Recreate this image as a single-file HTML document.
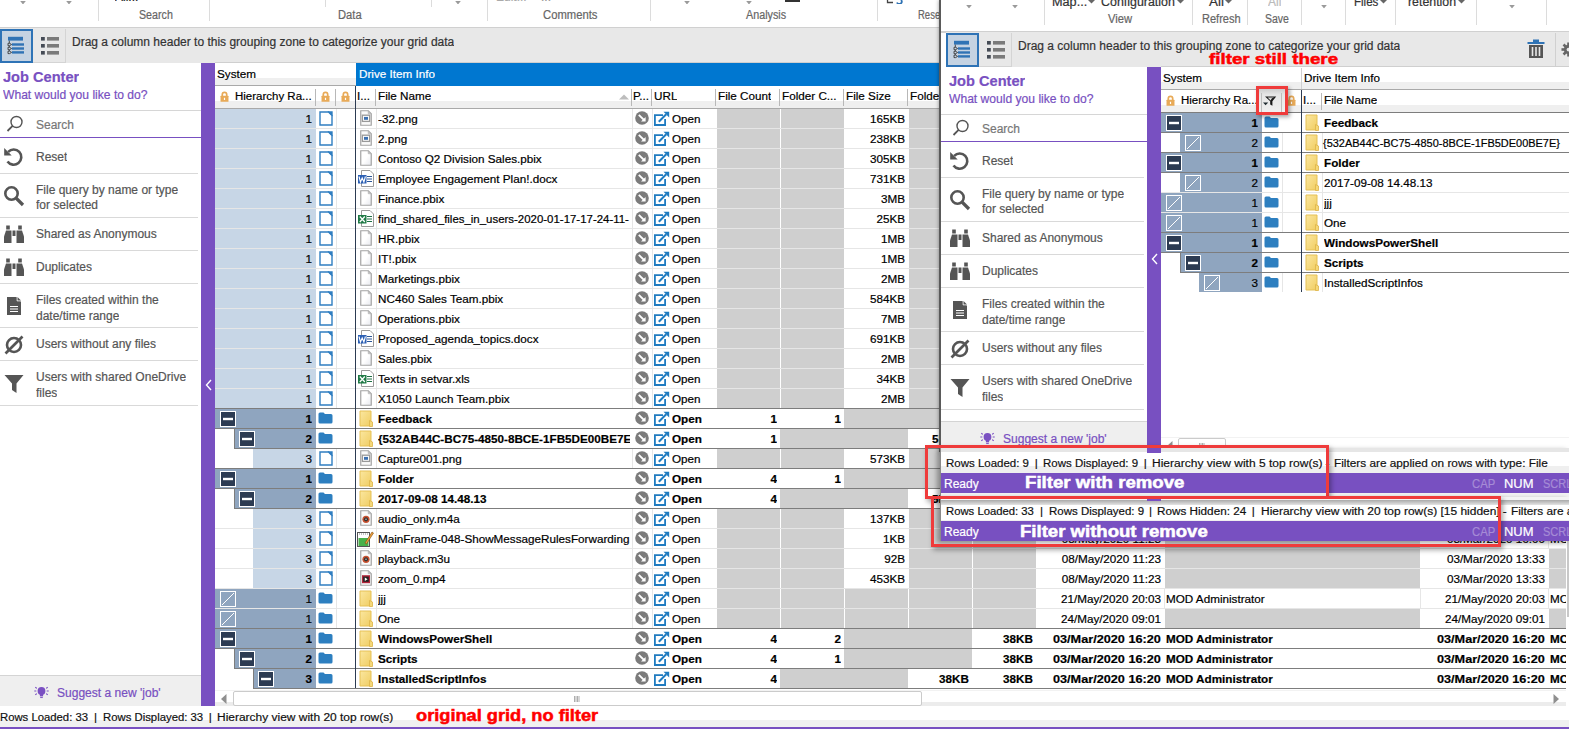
<!DOCTYPE html>
<html><head><meta charset="utf-8"><style>
html,body{margin:0;padding:0;}
body{width:1569px;height:729px;overflow:hidden;position:relative;background:#fff;font-family:"Liberation Sans",sans-serif;}
div{position:absolute;box-sizing:border-box;}
.t{white-space:pre;overflow:hidden;-webkit-text-stroke:0.2px currentColor;}
</style></head><body>
<svg width="0" height="0" style="position:absolute"><defs>
<linearGradient id="yg" x1="0" y1="0" x2="1" y2="1"><stop offset="0" stop-color="#fbe7a0"/><stop offset="1" stop-color="#f0cd62"/></linearGradient>
<symbol id="lock" viewBox="0 0 10 13"><path d="M2.4 6V4.2a2.6 2.6 0 0 1 5.2 0V6" fill="none" stroke="#e8aa58" stroke-width="2"/><rect x="0.3" y="5.6" width="9.4" height="7.2" rx="0.5" fill="#e8aa58"/><rect x="4.3" y="8" width="1.4" height="2.6" fill="#fff"/></symbol>
<symbol id="doc" viewBox="0 0 14 15"><path d="M1 1H9.5L13 4.5V14H1Z" fill="#fff" stroke="#2f7ec1" stroke-width="1.4"/><path d="M8.5 0.3H13.7V5.5Z" fill="#2f7ec1"/></symbol>
<symbol id="bfold" viewBox="0 0 15 12"><path d="M0.5 2a1.5 1.5 0 0 1 1.5-1.5h3.5l1.5 1.5h6a1.5 1.5 0 0 1 1.5 1.5v6.5a1.5 1.5 0 0 1-1.5 1.5H2A1.5 1.5 0 0 1 0.5 10Z" fill="#2d7fc0"/></symbol>
<symbol id="yfold" viewBox="0 0 15 17"><path d="M1 1H12V16H1Z" fill="url(#yg)" stroke="#e6c157" stroke-width="1"/><path d="M10.5 10.5L13.5 12V16.5H10.5Z" fill="#f5d879" stroke="#ddb448" stroke-width="0.8"/></symbol>
<symbol id="fimg" viewBox="0 0 12 16"><path d="M0.75 0.75H8.3L11.25 3.7V15.25H0.75Z" fill="#fafafa" stroke="#a3a3a3" stroke-width="1.2"/><path d="M8.3 0.75V3.7H11.25" fill="none" stroke="#b5b5b5" stroke-width="1"/><rect x="2.4" y="5.2" width="7.2" height="6.2" fill="#fff" stroke="#999" stroke-width="1.3"/><rect x="4" y="6.9" width="4" height="2.9" fill="#3a6fb0"/></symbol>
<symbol id="fblank" viewBox="0 0 12 16"><defs><linearGradient id="bg1" x1="0" y1="0" x2="1" y2="1"><stop offset="0.5" stop-color="#fff"/><stop offset="1" stop-color="#e6e8ee"/></linearGradient></defs><path d="M0.75 0.75H8.3L11.25 3.7V15.25H0.75Z" fill="url(#bg1)" stroke="#a3a3a3" stroke-width="1.2"/><path d="M8.3 0.75V3.7H11.25" fill="none" stroke="#b5b5b5" stroke-width="1"/></symbol>
<symbol id="fword" viewBox="0 0 16 17"><path d="M3.5 0.5H12L15.5 4V16.5H3.5Z" fill="#fff" stroke="#9a9a9a"/><path d="M9 6.5H14M9 9H14M9 11.5H14" stroke="#2b5797" stroke-width="1"/><rect x="0" y="5" width="8.5" height="8.5" fill="#2b5fb4"/><path d="M1 6.5L2.5 12L4.2 8L5.9 12L7.4 6.5" fill="none" stroke="#fff" stroke-width="1.1"/></symbol>
<symbol id="fxls" viewBox="0 0 16 17"><path d="M3.5 0.5H12L15.5 4V16.5H3.5Z" fill="#fff" stroke="#9a9a9a"/><path d="M9 6.5H14M9 9H14M9 11.5H14" stroke="#1e7145" stroke-width="1"/><rect x="0" y="5" width="8.5" height="8.5" fill="#1f7a46"/><path d="M1.8 6.5L6.8 12M6.8 6.5L1.8 12" stroke="#fff" stroke-width="1.3"/></symbol>
<symbol id="faudio" viewBox="0 0 12 16"><path d="M0.75 0.75H8.3L11.25 3.7V15.25H0.75Z" fill="#fafafa" stroke="#a3a3a3" stroke-width="1.2"/><path d="M8.3 0.75V3.7H11.25" fill="none" stroke="#b5b5b5" stroke-width="1"/><circle cx="6" cy="9.3" r="3.6" fill="#c9512f"/><circle cx="6" cy="9.3" r="2.1" fill="#333"/><circle cx="6" cy="9.3" r="0.7" fill="#ddd"/></symbol>
<symbol id="fvideo" viewBox="0 0 12 16"><path d="M0.75 0.75H8.3L11.25 3.7V15.25H0.75Z" fill="#fafafa" stroke="#a3a3a3" stroke-width="1.2"/><path d="M8.3 0.75V3.7H11.25" fill="none" stroke="#b5b5b5" stroke-width="1"/><rect x="2" y="5.2" width="8" height="8" fill="#b2233a"/><rect x="3.2" y="6.6" width="5.6" height="5.2" fill="#222"/><path d="M4.8 7.4L7.6 9.2L4.8 11Z" fill="#fff"/></symbol>
<symbol id="fnote" viewBox="0 0 17 17"><rect x="0.5" y="2.5" width="12" height="14" fill="#fff" stroke="#555"/><rect x="1.5" y="8" width="10" height="8" fill="#49b04a"/><path d="M2 4H11" stroke="#888" stroke-dasharray="1 1"/><path d="M8 13L15 2L16.5 3L9.5 14Z" fill="#f2a03a" stroke="#7a4a10" stroke-width="0.6"/></symbol>
<symbol id="pcirc" viewBox="0 0 14 14"><circle cx="7" cy="7" r="6.8" fill="#7b7b7b"/><path d="M3.8 3.8L9.2 9.2" stroke="#fff" stroke-width="1.9"/><path d="M10.6 6V10.6H6Z" fill="#fff"/></symbol>
<symbol id="open" viewBox="0 0 17 16"><path d="M10 4.1H1.9V14H12.1V8" fill="none" stroke="#1f7bc0" stroke-width="1.8"/><path d="M5.8 10.7L13.2 3.3" stroke="#1f7bc0" stroke-width="2"/><path d="M10.5 0.8H16.2V6.5Z" fill="#1f7bc0"/></symbol>
<symbol id="expm" viewBox="0 0 16 16"><rect x="0.5" y="0.5" width="15" height="15" fill="#2c3b52" stroke="#fff" stroke-width="1"/><rect x="3" y="6.8" width="10" height="2.4" fill="#fff"/></symbol>
<symbol id="leaf" viewBox="0 0 16 16"><rect x="0.5" y="0.5" width="15" height="15" fill="none" stroke="#fff" stroke-width="1"/><path d="M2 14L14 2" stroke="#fff" stroke-width="1"/></symbol>
<symbol id="magline" viewBox="0 0 18 18"><circle cx="10.5" cy="7" r="5.5" fill="none" stroke="#555" stroke-width="1.4"/><path d="M6.6 10.9L1.5 16" stroke="#555" stroke-width="1.8"/></symbol>
<symbol id="reset" viewBox="0 0 22 22"><path d="M5.2 5.8A7.6 7.6 0 1 1 4.5 15.5" fill="none" stroke="#555" stroke-width="2.6"/><path d="M1.2 2V9.5H8.7Z" fill="#555"/></symbol>
<symbol id="magbold" viewBox="0 0 22 22"><circle cx="8.5" cy="8.5" r="6.2" fill="none" stroke="#555" stroke-width="2.6"/><path d="M13 13L20 20" stroke="#555" stroke-width="3.2"/></symbol>
<symbol id="binoc" viewBox="0 0 22 20"><path d="M1 19V12.5L3 6.5H8.5V19Z" fill="#555"/><path d="M13.5 19V6.5H19L21 12.5V19Z" fill="#555"/><rect x="3.2" y="1.5" width="3.6" height="4" fill="#555"/><rect x="15.2" y="1.5" width="3.6" height="4" fill="#555"/><rect x="9.5" y="6.5" width="3" height="5.5" fill="#555"/></symbol>
<symbol id="filedoc" viewBox="0 0 16 20"><path d="M1 1H10.5L15 5.5V19H1Z" fill="#555"/><path d="M11 0.5V5H15.5" fill="#fff" stroke="#fff" stroke-width="0.6"/><path d="M11.5 1L15 4.5H11.5Z" fill="#555"/><path d="M4 10.5H12M4 13H12M4 15.5H12" stroke="#fff" stroke-width="1.1"/></symbol>
<symbol id="empty" viewBox="0 0 20 20"><circle cx="10" cy="10" r="7" fill="none" stroke="#555" stroke-width="2.6"/><path d="M1.5 18.5L18.5 1.5" stroke="#555" stroke-width="2.6"/></symbol>
<symbol id="funnel" viewBox="0 0 20 20"><path d="M0.5 1H19.5L12.5 9.5V19L8 16V9.5Z" fill="#555"/></symbol>
<symbol id="bulb" viewBox="0 0 15 12.5"><circle cx="7.5" cy="5" r="3.9" fill="#7a50c2"/><rect x="5.9" y="7.6" width="3.2" height="2.8" fill="#7a50c2"/><path d="M6.2 11.6H8.8" stroke="#7a50c2" stroke-width="1"/><path d="M0.3 5H2.3M12.7 5H14.7M1.3 1.2L2.9 2.4M13.7 1.2L12.1 2.4M1.3 8.8L2.9 7.6M13.7 8.8L12.1 7.6" stroke="#7a50c2" stroke-width="1.1"/></symbol>
<symbol id="hier" viewBox="0 0 20 20"><rect x="2" y="1.8" width="15" height="3.8" fill="#2f73b5"/><rect x="6" y="8.3" width="12" height="2.4" fill="#2f73b5"/><rect x="6" y="12.3" width="12" height="2.4" fill="#2f73b5"/><rect x="6" y="16.2" width="12" height="2.4" fill="#2f73b5"/><path d="M3.3 5.6V16" stroke="#3a3a3a" stroke-width="0.9"/><g fill="#c5d3e2" stroke="#3a3a3a" stroke-width="0.9"><path d="M2 8.3L3.6 8.3L5.6 9.5L3.6 10.7H2Z"/><path d="M2 12.3L3.6 12.3L5.6 13.5L3.6 14.7H2Z"/><path d="M2 16.2L3.6 16.2L5.6 17.4L3.6 18.6H2Z"/></g></symbol>
<symbol id="blist" viewBox="0 0 20 20"><rect x="1" y="1" width="3.8" height="3.6" fill="#454b55"/><rect x="1" y="8" width="3.8" height="3.6" fill="#454b55"/><rect x="1" y="15" width="3.8" height="3.6" fill="#454b55"/><rect x="7" y="1" width="12" height="3.6" fill="#7a7a7a"/><rect x="7" y="8" width="12" height="3.6" fill="#7a7a7a"/><rect x="7" y="15" width="12" height="3.6" fill="#7a7a7a"/></symbol>
<symbol id="trash" viewBox="0 0 18 20"><rect x="0.5" y="3" width="17" height="2" fill="#2f73b5"/><rect x="6" y="0.5" width="6" height="2.5" fill="#2f73b5"/><path d="M2 6H16V19H2Z" fill="#555"/><path d="M5.5 8V17M9 8V17M12.5 8V17" stroke="#e8e8e8" stroke-width="1.6"/></symbol>
<symbol id="arrdn" viewBox="0 0 8 5"><path d="M0 0H8L4 5Z" fill="#9a9a9a"/></symbol>
<symbol id="arrdn2" viewBox="0 0 7 4"><path d="M0 0H7L3.5 3.5Z" fill="#666"/></symbol>
<symbol id="filt" viewBox="0 0 16 14"><path d="M3 2.6H14.2L10.4 7.3V11.8L8.2 10.4V7.3Z" fill="#1a1a1a"/><path d="M5.6 3.6L8.6 6.5L9.9 4.2L12.2 3.6Z" fill="#f0f0f0" opacity="0.9"/><path d="M1 8.4H6.2L3.6 11.2Z" fill="#1e2a30"/></symbol>
<symbol id="gear" viewBox="0 0 16 16"><g fill="#666"><circle cx="8" cy="8" r="5"/><rect x="6.6" y="0.5" width="2.8" height="15"/><rect x="0.5" y="6.6" width="15" height="2.8"/><rect x="6.6" y="0.5" width="2.8" height="15" transform="rotate(45 8 8)"/><rect x="6.6" y="0.5" width="2.8" height="15" transform="rotate(-45 8 8)"/></g><circle cx="8" cy="8" r="2" fill="#e8e8e8"/></symbol>
</defs></svg>

<div style="left:0px;top:0px;width:1569px;height:28px;background:#fff;"></div>
<div style="left:98px;top:0px;width:1px;height:21px;background:#dcdcdc;"></div>
<div style="left:209px;top:0px;width:1px;height:21px;background:#dcdcdc;"></div>
<div style="left:487px;top:0px;width:1px;height:21px;background:#dcdcdc;"></div>
<div style="left:650px;top:0px;width:1px;height:21px;background:#dcdcdc;"></div>
<div style="left:877px;top:0px;width:1px;height:21px;background:#dcdcdc;"></div>
<div style="left:325px;top:0px;width:1px;height:7px;background:#dcdcdc;"></div>
<div style="left:431px;top:0px;width:1px;height:7px;background:#dcdcdc;"></div>
<svg style="position:absolute;left:20px;top:0.5px" width="6" height="3.5"><use href="#arrdn"/></svg>
<svg style="position:absolute;left:66px;top:0.5px" width="6" height="3.5"><use href="#arrdn"/></svg>
<svg style="position:absolute;left:455px;top:0.5px" width="6" height="3.5"><use href="#arrdn"/></svg>
<svg style="position:absolute;left:684px;top:0.5px" width="6" height="3.5"><use href="#arrdn"/></svg>
<svg style="position:absolute;left:746px;top:0.5px" width="6" height="3.5"><use href="#arrdn"/></svg>
<div class="t" style="left:115px;top:-9px;height:12px;line-height:12px;font-size:12px;color:#222;">All...</div>
<div class="t" style="left:496px;top:-9px;height:12px;line-height:12px;font-size:12px;color:#aaa;">Edit...</div>
<div class="t" style="left:541px;top:-9px;height:12px;line-height:12px;font-size:12px;color:#999;">...</div>
<div style="left:785px;top:0px;width:15px;height:2px;background:#333;"></div>
<svg style="position:absolute;left:886px;top:-6px;" width="18" height="10" viewBox="0 0 18 10"><path d="M7 1H1.5V8.5H7M1.5 5H6" stroke="#444" stroke-width="1.3" fill="none"/><path d="M15.5 0V6.5A2.3 2.3 0 0 1 11 8.5" stroke="#2f73b5" stroke-width="1.8" fill="none"/></svg>
<div class="t" style="left:138.92px;top:6px;height:18px;line-height:18px;font-size:12px;color:#666;transform-origin:0 0;transform:scaleX(0.8893);overflow:visible;">Search</div>
<div class="t" style="left:337.91px;top:6px;height:18px;line-height:18px;font-size:12px;color:#666;transform-origin:0 0;transform:scaleX(0.9319);overflow:visible;">Data</div>
<div class="t" style="left:543.44px;top:6px;height:18px;line-height:18px;font-size:12px;color:#666;transform-origin:0 0;transform:scaleX(0.9386);overflow:visible;">Comments</div>
<div class="t" style="left:746.00px;top:6px;height:18px;line-height:18px;font-size:12px;color:#666;transform-origin:0 0;transform:scaleX(0.8966);overflow:visible;">Analysis</div>
<div class="t" style="left:918.24px;top:6px;height:18px;line-height:18px;font-size:12px;color:#666;transform-origin:0 0;transform:scaleX(0.7919);overflow:visible;">Rese</div>
<div style="left:0px;top:27px;width:1569px;height:1px;background:#d0d0d0;"></div>
<div style="left:0px;top:28px;width:941px;height:35px;background:#e8e8e8;"></div>
<div style="left:0px;top:29px;width:33px;height:34px;background:#c5d3e2;border:2px solid #2e73b6;"></div>
<div style="left:33px;top:29px;width:33px;height:34px;background:#e8e8e8;border-right:1px solid #d4d4d4;border-bottom:1px solid #d4d4d4;"></div>
<svg style="position:absolute;left:6px;top:35px" width="20" height="20"><use href="#hier"/></svg>
<svg style="position:absolute;left:40px;top:36px" width="20" height="20"><use href="#blist"/></svg>
<div class="t" style="left:72px;top:32px;height:20px;line-height:20px;font-size:12px;color:#333;">Drag a column header to this grouping zone to categorize your grid data</div>
<div style="left:0px;top:63px;width:201px;height:643px;background:#fff;"></div>
<div class="t" style="left:3px;top:67px;height:20px;line-height:20px;font-size:14.6px;color:#7850c1;font-weight:700;">Job Center</div>
<div class="t" style="left:3px;top:86px;height:18px;line-height:18px;font-size:12.1px;color:#7850c1;">What would you like to do?</div>
<div style="left:0px;top:110px;width:201px;height:1px;background:#d6d6d6;"></div>
<svg style="position:absolute;left:6px;top:115px" width="18" height="18"><use href="#magline"/></svg>
<div class="t" style="left:36px;top:115px;height:20px;line-height:20px;font-size:12px;color:#777;">Search</div>
<div style="left:0px;top:137px;width:201px;height:1px;background:#7850c1;"></div>
<svg style="position:absolute;left:3px;top:146px" width="22" height="22"><use href="#reset"/></svg>
<div class="t" style="left:36px;top:148px;height:18px;line-height:18px;font-size:12px;color:#555;">Reset</div>
<div style="left:0px;top:173px;width:198px;height:1px;background:#d9d9d9;"></div>
<svg style="position:absolute;left:3px;top:185px" width="22" height="22"><use href="#magbold"/></svg>
<div class="t" style="left:36px;top:181px;height:18px;line-height:18px;font-size:12px;color:#555;">File query by name or type</div>
<div class="t" style="left:36px;top:196px;height:18px;line-height:18px;font-size:12px;color:#555;">for selected</div>
<div style="left:0px;top:217px;width:198px;height:1px;background:#d9d9d9;"></div>
<svg style="position:absolute;left:3px;top:224px" width="22" height="20"><use href="#binoc"/></svg>
<div class="t" style="left:36px;top:225px;height:18px;line-height:18px;font-size:12px;color:#555;">Shared as Anonymous</div>
<div style="left:0px;top:250px;width:198px;height:1px;background:#d9d9d9;"></div>
<svg style="position:absolute;left:3px;top:257px" width="22" height="20"><use href="#binoc"/></svg>
<div class="t" style="left:36px;top:258px;height:18px;line-height:18px;font-size:12px;color:#555;">Duplicates</div>
<div style="left:0px;top:283px;width:198px;height:1px;background:#d9d9d9;"></div>
<svg style="position:absolute;left:6px;top:296px" width="16" height="20"><use href="#filedoc"/></svg>
<div class="t" style="left:36px;top:291px;height:18px;line-height:18px;font-size:12px;color:#555;">Files created within the</div>
<div class="t" style="left:36px;top:307px;height:18px;line-height:18px;font-size:12px;color:#555;">date/time range</div>
<div style="left:0px;top:327px;width:198px;height:1px;background:#d9d9d9;"></div>
<svg style="position:absolute;left:4px;top:335px" width="20" height="20"><use href="#empty"/></svg>
<div class="t" style="left:36px;top:335px;height:18px;line-height:18px;font-size:12px;color:#555;">Users without any files</div>
<div style="left:0px;top:360px;width:198px;height:1px;background:#d9d9d9;"></div>
<svg style="position:absolute;left:4px;top:374px" width="20" height="20"><use href="#funnel"/></svg>
<div class="t" style="left:36px;top:368px;height:18px;line-height:18px;font-size:12px;color:#555;">Users with shared OneDrive</div>
<div class="t" style="left:36px;top:384px;height:18px;line-height:18px;font-size:12px;color:#555;">files</div>
<div style="left:0px;top:405px;width:198px;height:1px;background:#d9d9d9;"></div>
<div style="left:0px;top:675px;width:201px;height:31px;background:#efefef;border-top:1px solid #d4d4d4;"></div>
<svg style="position:absolute;left:34.3px;top:686px" width="15" height="12.5"><use href="#bulb"/></svg>
<div class="t" style="left:57.26px;top:684px;height:18px;line-height:18px;font-size:12.3px;color:#7850c1;transform-origin:0 0;transform:scaleX(0.9787);overflow:visible;">Suggest a new &#39;job&#39;</div>
<div style="left:201px;top:63px;width:14px;height:643px;background:#7850c1;"></div>
<svg style="position:absolute;left:205px;top:379px;" width="7" height="12" viewBox="0 0 7 12"><path d="M6 1L1.5 6L6 11" fill="none" stroke="#fff" stroke-width="1.4"/></svg>
<div style="left:215px;top:63px;width:1351px;height:45px;background:#fff;"></div>
<div style="left:215px;top:62px;width:1351px;height:1px;background:#cfcfcf;"></div>
<div style="left:215px;top:78px;width:1351px;height:7px;background:#efefef;"></div>
<div style="left:215px;top:85px;width:1351px;height:1px;background:#a9a9a9;"></div>
<div style="left:215px;top:101px;width:1351px;height:7px;background:#efefef;"></div>
<div style="left:215px;top:108px;width:1351px;height:1px;background:#a9a9a9;"></div>
<div class="t" style="left:217px;top:63px;height:22px;line-height:22px;font-size:11.7px;">System</div>
<div style="left:356px;top:63px;width:1210px;height:23px;background:#0077d0;"></div>
<div class="t" style="left:359px;top:63px;height:22px;line-height:22px;font-size:11.7px;color:#fff;">Drive Item Info</div>
<div style="left:315px;top:89px;width:1px;height:17px;background:#b8b8b8;"></div>
<div style="left:335px;top:89px;width:1px;height:17px;background:#b8b8b8;"></div>
<div style="left:355px;top:89px;width:1px;height:17px;background:#b8b8b8;"></div>
<div style="left:375px;top:89px;width:1px;height:17px;background:#b8b8b8;"></div>
<div style="left:631px;top:89px;width:1px;height:17px;background:#b8b8b8;"></div>
<div style="left:651px;top:89px;width:1px;height:17px;background:#b8b8b8;"></div>
<div style="left:715px;top:89px;width:1px;height:17px;background:#b8b8b8;"></div>
<div style="left:779px;top:89px;width:1px;height:17px;background:#b8b8b8;"></div>
<div style="left:843px;top:89px;width:1px;height:17px;background:#b8b8b8;"></div>
<div style="left:907px;top:89px;width:1px;height:17px;background:#b8b8b8;"></div>
<div style="left:971px;top:89px;width:1px;height:17px;background:#b8b8b8;"></div>
<div style="left:1035px;top:89px;width:1px;height:17px;background:#b8b8b8;"></div>
<div style="left:1163px;top:89px;width:1px;height:17px;background:#b8b8b8;"></div>
<div style="left:1419px;top:89px;width:1px;height:17px;background:#b8b8b8;"></div>
<div style="left:1547px;top:89px;width:1px;height:17px;background:#b8b8b8;"></div>
<div style="left:355px;top:86px;width:1px;height:22px;background:#2c3b52;"></div>
<svg style="position:absolute;left:220px;top:91px" width="9" height="11"><use href="#lock"/></svg>
<div class="t" style="left:234.58px;top:86px;height:20px;line-height:20px;font-size:11.7px;color:#000;transform-origin:0 0;transform:scaleX(0.9830);overflow:visible;">Hierarchy Ra...</div>
<svg style="position:absolute;left:321px;top:91px" width="9" height="11"><use href="#lock"/></svg>
<svg style="position:absolute;left:341px;top:91px" width="9" height="11"><use href="#lock"/></svg>
<div class="t" style="left:357px;top:85px;height:22px;line-height:22px;font-size:11.7px;">I...</div>
<div class="t" style="left:378px;top:85px;height:22px;line-height:22px;font-size:11.7px;">File Name</div>
<svg style="position:absolute;left:619px;top:94px;" width="10" height="6" viewBox="0 0 10 6"><path d="M0 5.5L5 0.5L10 5.5Z" fill="#bdbdbd"/></svg>
<div class="t" style="left:633px;top:85px;height:22px;line-height:22px;font-size:11.7px;">P...</div>
<div class="t" style="left:654px;top:85px;height:22px;line-height:22px;font-size:11.7px;">URL</div>
<div class="t" style="left:718px;top:85px;height:22px;line-height:22px;font-size:11.7px;">File Count</div>
<div class="t" style="left:782px;top:85px;height:22px;line-height:22px;font-size:11.7px;">Folder C...</div>
<div class="t" style="left:846px;top:85px;height:22px;line-height:22px;font-size:11.7px;">File Size</div>
<div class="t" style="left:910px;top:85px;height:22px;line-height:22px;font-size:11.7px;">Folder Size</div>
<div style="left:215px;top:109px;width:1351px;height:19px;background:#fff;"></div>
<div style="left:336px;top:109px;width:1px;height:19px;background:#e6e6e6;"></div>
<div style="left:376px;top:109px;width:1px;height:19px;background:#e6e6e6;"></div>
<div style="left:632px;top:109px;width:1px;height:19px;background:#e6e6e6;"></div>
<div style="left:652px;top:109px;width:1px;height:19px;background:#e6e6e6;"></div>
<div style="left:717px;top:109px;width:63px;height:19px;background:#cfcfcf;"></div>
<div style="left:781px;top:109px;width:63px;height:19px;background:#cfcfcf;"></div>
<div class="t" style="left:844px;top:109px;height:20px;line-height:20px;font-size:11.7px;width:61px;text-align:right;">165KB</div>
<div style="left:909px;top:109px;width:63px;height:19px;background:#cfcfcf;"></div>
<div style="left:973px;top:109px;width:63px;height:19px;background:#cfcfcf;"></div>
<div class="t" style="left:1036px;top:109px;height:20px;line-height:20px;font-size:11.7px;width:125px;text-align:right;">08/May/2020 11:23</div>
<div style="left:1165px;top:109px;width:255px;height:19px;background:#cfcfcf;"></div>
<div class="t" style="left:1420px;top:109px;height:20px;line-height:20px;font-size:11.7px;width:125px;text-align:right;">03/Mar/2020 13:33</div>
<div style="left:1549px;top:109px;width:17px;height:19px;background:#cfcfcf;"></div>
<div style="left:215px;top:109px;width:101px;height:19px;background:#c7d6e6;"></div>
<div class="t" style="left:215px;top:109px;height:20px;line-height:20px;font-size:11.7px;width:97px;text-align:right;">1</div>
<svg style="position:absolute;left:319px;top:111px" width="14" height="15"><use href="#doc"/></svg>
<svg style="position:absolute;left:360px;top:110px" width="12" height="16"><use href="#fimg"/></svg>
<div class="t" style="left:378px;top:109px;height:20px;line-height:20px;font-size:11.7px;width:252px;text-align:left;">-32.png</div>
<svg style="position:absolute;left:635px;top:111px" width="14" height="14"><use href="#pcirc"/></svg>
<svg style="position:absolute;left:653px;top:111px" width="17" height="16"><use href="#open"/></svg>
<div class="t" style="left:672px;top:109px;height:20px;line-height:20px;font-size:11.7px;">Open</div>
<div style="left:215px;top:128px;width:1351px;height:20px;background:#fff;"></div>
<div style="left:336px;top:129px;width:1px;height:19px;background:#e6e6e6;"></div>
<div style="left:376px;top:129px;width:1px;height:19px;background:#e6e6e6;"></div>
<div style="left:632px;top:129px;width:1px;height:19px;background:#e6e6e6;"></div>
<div style="left:652px;top:129px;width:1px;height:19px;background:#e6e6e6;"></div>
<div style="left:717px;top:129px;width:63px;height:19px;background:#cfcfcf;"></div>
<div style="left:781px;top:129px;width:63px;height:19px;background:#cfcfcf;"></div>
<div class="t" style="left:844px;top:129px;height:20px;line-height:20px;font-size:11.7px;width:61px;text-align:right;">238KB</div>
<div style="left:909px;top:129px;width:63px;height:19px;background:#cfcfcf;"></div>
<div style="left:973px;top:129px;width:63px;height:19px;background:#cfcfcf;"></div>
<div class="t" style="left:1036px;top:129px;height:20px;line-height:20px;font-size:11.7px;width:125px;text-align:right;">08/May/2020 11:23</div>
<div style="left:1165px;top:129px;width:255px;height:19px;background:#cfcfcf;"></div>
<div class="t" style="left:1420px;top:129px;height:20px;line-height:20px;font-size:11.7px;width:125px;text-align:right;">03/Mar/2020 13:33</div>
<div style="left:1549px;top:129px;width:17px;height:19px;background:#cfcfcf;"></div>
<div style="left:215px;top:129px;width:101px;height:19px;background:#c7d6e6;"></div>
<div class="t" style="left:215px;top:129px;height:20px;line-height:20px;font-size:11.7px;width:97px;text-align:right;">1</div>
<svg style="position:absolute;left:319px;top:131px" width="14" height="15"><use href="#doc"/></svg>
<svg style="position:absolute;left:360px;top:130px" width="12" height="16"><use href="#fimg"/></svg>
<div class="t" style="left:378px;top:129px;height:20px;line-height:20px;font-size:11.7px;width:252px;text-align:left;">2.png</div>
<svg style="position:absolute;left:635px;top:131px" width="14" height="14"><use href="#pcirc"/></svg>
<svg style="position:absolute;left:653px;top:131px" width="17" height="16"><use href="#open"/></svg>
<div class="t" style="left:672px;top:129px;height:20px;line-height:20px;font-size:11.7px;">Open</div>
<div style="left:215px;top:148px;width:1351px;height:20px;background:#fff;"></div>
<div style="left:336px;top:149px;width:1px;height:19px;background:#e6e6e6;"></div>
<div style="left:376px;top:149px;width:1px;height:19px;background:#e6e6e6;"></div>
<div style="left:632px;top:149px;width:1px;height:19px;background:#e6e6e6;"></div>
<div style="left:652px;top:149px;width:1px;height:19px;background:#e6e6e6;"></div>
<div style="left:717px;top:149px;width:63px;height:19px;background:#cfcfcf;"></div>
<div style="left:781px;top:149px;width:63px;height:19px;background:#cfcfcf;"></div>
<div class="t" style="left:844px;top:149px;height:20px;line-height:20px;font-size:11.7px;width:61px;text-align:right;">305KB</div>
<div style="left:909px;top:149px;width:63px;height:19px;background:#cfcfcf;"></div>
<div style="left:973px;top:149px;width:63px;height:19px;background:#cfcfcf;"></div>
<div class="t" style="left:1036px;top:149px;height:20px;line-height:20px;font-size:11.7px;width:125px;text-align:right;">08/May/2020 11:23</div>
<div style="left:1165px;top:149px;width:255px;height:19px;background:#cfcfcf;"></div>
<div class="t" style="left:1420px;top:149px;height:20px;line-height:20px;font-size:11.7px;width:125px;text-align:right;">03/Mar/2020 13:33</div>
<div style="left:1549px;top:149px;width:17px;height:19px;background:#cfcfcf;"></div>
<div style="left:215px;top:149px;width:101px;height:19px;background:#c7d6e6;"></div>
<div class="t" style="left:215px;top:149px;height:20px;line-height:20px;font-size:11.7px;width:97px;text-align:right;">1</div>
<svg style="position:absolute;left:319px;top:151px" width="14" height="15"><use href="#doc"/></svg>
<svg style="position:absolute;left:360px;top:150px" width="12" height="16"><use href="#fblank"/></svg>
<div class="t" style="left:378px;top:149px;height:20px;line-height:20px;font-size:11.7px;width:252px;text-align:left;">Contoso Q2 Division Sales.pbix</div>
<svg style="position:absolute;left:635px;top:151px" width="14" height="14"><use href="#pcirc"/></svg>
<svg style="position:absolute;left:653px;top:151px" width="17" height="16"><use href="#open"/></svg>
<div class="t" style="left:672px;top:149px;height:20px;line-height:20px;font-size:11.7px;">Open</div>
<div style="left:215px;top:168px;width:1351px;height:20px;background:#fff;"></div>
<div style="left:336px;top:169px;width:1px;height:19px;background:#e6e6e6;"></div>
<div style="left:376px;top:169px;width:1px;height:19px;background:#e6e6e6;"></div>
<div style="left:632px;top:169px;width:1px;height:19px;background:#e6e6e6;"></div>
<div style="left:652px;top:169px;width:1px;height:19px;background:#e6e6e6;"></div>
<div style="left:717px;top:169px;width:63px;height:19px;background:#cfcfcf;"></div>
<div style="left:781px;top:169px;width:63px;height:19px;background:#cfcfcf;"></div>
<div class="t" style="left:844px;top:169px;height:20px;line-height:20px;font-size:11.7px;width:61px;text-align:right;">731KB</div>
<div style="left:909px;top:169px;width:63px;height:19px;background:#cfcfcf;"></div>
<div style="left:973px;top:169px;width:63px;height:19px;background:#cfcfcf;"></div>
<div class="t" style="left:1036px;top:169px;height:20px;line-height:20px;font-size:11.7px;width:125px;text-align:right;">08/May/2020 11:23</div>
<div style="left:1165px;top:169px;width:255px;height:19px;background:#cfcfcf;"></div>
<div class="t" style="left:1420px;top:169px;height:20px;line-height:20px;font-size:11.7px;width:125px;text-align:right;">03/Mar/2020 13:33</div>
<div style="left:1549px;top:169px;width:17px;height:19px;background:#cfcfcf;"></div>
<div style="left:215px;top:169px;width:101px;height:19px;background:#c7d6e6;"></div>
<div class="t" style="left:215px;top:169px;height:20px;line-height:20px;font-size:11.7px;width:97px;text-align:right;">1</div>
<svg style="position:absolute;left:319px;top:171px" width="14" height="15"><use href="#doc"/></svg>
<svg style="position:absolute;left:358px;top:170px" width="16" height="17"><use href="#fword"/></svg>
<div class="t" style="left:378px;top:169px;height:20px;line-height:20px;font-size:11.7px;width:252px;text-align:left;">Employee Engagement Plan!.docx</div>
<svg style="position:absolute;left:635px;top:171px" width="14" height="14"><use href="#pcirc"/></svg>
<svg style="position:absolute;left:653px;top:171px" width="17" height="16"><use href="#open"/></svg>
<div class="t" style="left:672px;top:169px;height:20px;line-height:20px;font-size:11.7px;">Open</div>
<div style="left:215px;top:188px;width:1351px;height:20px;background:#fff;"></div>
<div style="left:336px;top:189px;width:1px;height:19px;background:#e6e6e6;"></div>
<div style="left:376px;top:189px;width:1px;height:19px;background:#e6e6e6;"></div>
<div style="left:632px;top:189px;width:1px;height:19px;background:#e6e6e6;"></div>
<div style="left:652px;top:189px;width:1px;height:19px;background:#e6e6e6;"></div>
<div style="left:717px;top:189px;width:63px;height:19px;background:#cfcfcf;"></div>
<div style="left:781px;top:189px;width:63px;height:19px;background:#cfcfcf;"></div>
<div class="t" style="left:844px;top:189px;height:20px;line-height:20px;font-size:11.7px;width:61px;text-align:right;">3MB</div>
<div style="left:909px;top:189px;width:63px;height:19px;background:#cfcfcf;"></div>
<div style="left:973px;top:189px;width:63px;height:19px;background:#cfcfcf;"></div>
<div class="t" style="left:1036px;top:189px;height:20px;line-height:20px;font-size:11.7px;width:125px;text-align:right;">08/May/2020 11:23</div>
<div style="left:1165px;top:189px;width:255px;height:19px;background:#cfcfcf;"></div>
<div class="t" style="left:1420px;top:189px;height:20px;line-height:20px;font-size:11.7px;width:125px;text-align:right;">03/Mar/2020 13:33</div>
<div style="left:1549px;top:189px;width:17px;height:19px;background:#cfcfcf;"></div>
<div style="left:215px;top:189px;width:101px;height:19px;background:#c7d6e6;"></div>
<div class="t" style="left:215px;top:189px;height:20px;line-height:20px;font-size:11.7px;width:97px;text-align:right;">1</div>
<svg style="position:absolute;left:319px;top:191px" width="14" height="15"><use href="#doc"/></svg>
<svg style="position:absolute;left:360px;top:190px" width="12" height="16"><use href="#fblank"/></svg>
<div class="t" style="left:378px;top:189px;height:20px;line-height:20px;font-size:11.7px;width:252px;text-align:left;">Finance.pbix</div>
<svg style="position:absolute;left:635px;top:191px" width="14" height="14"><use href="#pcirc"/></svg>
<svg style="position:absolute;left:653px;top:191px" width="17" height="16"><use href="#open"/></svg>
<div class="t" style="left:672px;top:189px;height:20px;line-height:20px;font-size:11.7px;">Open</div>
<div style="left:215px;top:208px;width:1351px;height:20px;background:#fff;"></div>
<div style="left:336px;top:209px;width:1px;height:19px;background:#e6e6e6;"></div>
<div style="left:376px;top:209px;width:1px;height:19px;background:#e6e6e6;"></div>
<div style="left:632px;top:209px;width:1px;height:19px;background:#e6e6e6;"></div>
<div style="left:652px;top:209px;width:1px;height:19px;background:#e6e6e6;"></div>
<div style="left:717px;top:209px;width:63px;height:19px;background:#cfcfcf;"></div>
<div style="left:781px;top:209px;width:63px;height:19px;background:#cfcfcf;"></div>
<div class="t" style="left:844px;top:209px;height:20px;line-height:20px;font-size:11.7px;width:61px;text-align:right;">25KB</div>
<div style="left:909px;top:209px;width:63px;height:19px;background:#cfcfcf;"></div>
<div style="left:973px;top:209px;width:63px;height:19px;background:#cfcfcf;"></div>
<div class="t" style="left:1036px;top:209px;height:20px;line-height:20px;font-size:11.7px;width:125px;text-align:right;">08/May/2020 11:23</div>
<div style="left:1165px;top:209px;width:255px;height:19px;background:#cfcfcf;"></div>
<div class="t" style="left:1420px;top:209px;height:20px;line-height:20px;font-size:11.7px;width:125px;text-align:right;">03/Mar/2020 13:33</div>
<div style="left:1549px;top:209px;width:17px;height:19px;background:#cfcfcf;"></div>
<div style="left:215px;top:209px;width:101px;height:19px;background:#c7d6e6;"></div>
<div class="t" style="left:215px;top:209px;height:20px;line-height:20px;font-size:11.7px;width:97px;text-align:right;">1</div>
<svg style="position:absolute;left:319px;top:211px" width="14" height="15"><use href="#doc"/></svg>
<svg style="position:absolute;left:358px;top:210px" width="16" height="17"><use href="#fxls"/></svg>
<div class="t" style="left:378.33px;top:209px;height:20px;line-height:20px;font-size:11.7px;color:#000;transform-origin:0 0;transform:scaleX(0.9785);overflow:visible;">find_shared_files_in_users-2020-01-17-17-24-11-</div>
<svg style="position:absolute;left:635px;top:211px" width="14" height="14"><use href="#pcirc"/></svg>
<svg style="position:absolute;left:653px;top:211px" width="17" height="16"><use href="#open"/></svg>
<div class="t" style="left:672px;top:209px;height:20px;line-height:20px;font-size:11.7px;">Open</div>
<div style="left:215px;top:228px;width:1351px;height:20px;background:#fff;"></div>
<div style="left:336px;top:229px;width:1px;height:19px;background:#e6e6e6;"></div>
<div style="left:376px;top:229px;width:1px;height:19px;background:#e6e6e6;"></div>
<div style="left:632px;top:229px;width:1px;height:19px;background:#e6e6e6;"></div>
<div style="left:652px;top:229px;width:1px;height:19px;background:#e6e6e6;"></div>
<div style="left:717px;top:229px;width:63px;height:19px;background:#cfcfcf;"></div>
<div style="left:781px;top:229px;width:63px;height:19px;background:#cfcfcf;"></div>
<div class="t" style="left:844px;top:229px;height:20px;line-height:20px;font-size:11.7px;width:61px;text-align:right;">1MB</div>
<div style="left:909px;top:229px;width:63px;height:19px;background:#cfcfcf;"></div>
<div style="left:973px;top:229px;width:63px;height:19px;background:#cfcfcf;"></div>
<div class="t" style="left:1036px;top:229px;height:20px;line-height:20px;font-size:11.7px;width:125px;text-align:right;">08/May/2020 11:23</div>
<div style="left:1165px;top:229px;width:255px;height:19px;background:#cfcfcf;"></div>
<div class="t" style="left:1420px;top:229px;height:20px;line-height:20px;font-size:11.7px;width:125px;text-align:right;">03/Mar/2020 13:33</div>
<div style="left:1549px;top:229px;width:17px;height:19px;background:#cfcfcf;"></div>
<div style="left:215px;top:229px;width:101px;height:19px;background:#c7d6e6;"></div>
<div class="t" style="left:215px;top:229px;height:20px;line-height:20px;font-size:11.7px;width:97px;text-align:right;">1</div>
<svg style="position:absolute;left:319px;top:231px" width="14" height="15"><use href="#doc"/></svg>
<svg style="position:absolute;left:360px;top:230px" width="12" height="16"><use href="#fblank"/></svg>
<div class="t" style="left:378px;top:229px;height:20px;line-height:20px;font-size:11.7px;width:252px;text-align:left;">HR.pbix</div>
<svg style="position:absolute;left:635px;top:231px" width="14" height="14"><use href="#pcirc"/></svg>
<svg style="position:absolute;left:653px;top:231px" width="17" height="16"><use href="#open"/></svg>
<div class="t" style="left:672px;top:229px;height:20px;line-height:20px;font-size:11.7px;">Open</div>
<div style="left:215px;top:248px;width:1351px;height:20px;background:#fff;"></div>
<div style="left:336px;top:249px;width:1px;height:19px;background:#e6e6e6;"></div>
<div style="left:376px;top:249px;width:1px;height:19px;background:#e6e6e6;"></div>
<div style="left:632px;top:249px;width:1px;height:19px;background:#e6e6e6;"></div>
<div style="left:652px;top:249px;width:1px;height:19px;background:#e6e6e6;"></div>
<div style="left:717px;top:249px;width:63px;height:19px;background:#cfcfcf;"></div>
<div style="left:781px;top:249px;width:63px;height:19px;background:#cfcfcf;"></div>
<div class="t" style="left:844px;top:249px;height:20px;line-height:20px;font-size:11.7px;width:61px;text-align:right;">1MB</div>
<div style="left:909px;top:249px;width:63px;height:19px;background:#cfcfcf;"></div>
<div style="left:973px;top:249px;width:63px;height:19px;background:#cfcfcf;"></div>
<div class="t" style="left:1036px;top:249px;height:20px;line-height:20px;font-size:11.7px;width:125px;text-align:right;">08/May/2020 11:23</div>
<div style="left:1165px;top:249px;width:255px;height:19px;background:#cfcfcf;"></div>
<div class="t" style="left:1420px;top:249px;height:20px;line-height:20px;font-size:11.7px;width:125px;text-align:right;">03/Mar/2020 13:33</div>
<div style="left:1549px;top:249px;width:17px;height:19px;background:#cfcfcf;"></div>
<div style="left:215px;top:249px;width:101px;height:19px;background:#c7d6e6;"></div>
<div class="t" style="left:215px;top:249px;height:20px;line-height:20px;font-size:11.7px;width:97px;text-align:right;">1</div>
<svg style="position:absolute;left:319px;top:251px" width="14" height="15"><use href="#doc"/></svg>
<svg style="position:absolute;left:360px;top:250px" width="12" height="16"><use href="#fblank"/></svg>
<div class="t" style="left:378px;top:249px;height:20px;line-height:20px;font-size:11.7px;width:252px;text-align:left;">IT!.pbix</div>
<svg style="position:absolute;left:635px;top:251px" width="14" height="14"><use href="#pcirc"/></svg>
<svg style="position:absolute;left:653px;top:251px" width="17" height="16"><use href="#open"/></svg>
<div class="t" style="left:672px;top:249px;height:20px;line-height:20px;font-size:11.7px;">Open</div>
<div style="left:215px;top:268px;width:1351px;height:20px;background:#fff;"></div>
<div style="left:336px;top:269px;width:1px;height:19px;background:#e6e6e6;"></div>
<div style="left:376px;top:269px;width:1px;height:19px;background:#e6e6e6;"></div>
<div style="left:632px;top:269px;width:1px;height:19px;background:#e6e6e6;"></div>
<div style="left:652px;top:269px;width:1px;height:19px;background:#e6e6e6;"></div>
<div style="left:717px;top:269px;width:63px;height:19px;background:#cfcfcf;"></div>
<div style="left:781px;top:269px;width:63px;height:19px;background:#cfcfcf;"></div>
<div class="t" style="left:844px;top:269px;height:20px;line-height:20px;font-size:11.7px;width:61px;text-align:right;">2MB</div>
<div style="left:909px;top:269px;width:63px;height:19px;background:#cfcfcf;"></div>
<div style="left:973px;top:269px;width:63px;height:19px;background:#cfcfcf;"></div>
<div class="t" style="left:1036px;top:269px;height:20px;line-height:20px;font-size:11.7px;width:125px;text-align:right;">08/May/2020 11:23</div>
<div style="left:1165px;top:269px;width:255px;height:19px;background:#cfcfcf;"></div>
<div class="t" style="left:1420px;top:269px;height:20px;line-height:20px;font-size:11.7px;width:125px;text-align:right;">03/Mar/2020 13:33</div>
<div style="left:1549px;top:269px;width:17px;height:19px;background:#cfcfcf;"></div>
<div style="left:215px;top:269px;width:101px;height:19px;background:#c7d6e6;"></div>
<div class="t" style="left:215px;top:269px;height:20px;line-height:20px;font-size:11.7px;width:97px;text-align:right;">1</div>
<svg style="position:absolute;left:319px;top:271px" width="14" height="15"><use href="#doc"/></svg>
<svg style="position:absolute;left:360px;top:270px" width="12" height="16"><use href="#fblank"/></svg>
<div class="t" style="left:378px;top:269px;height:20px;line-height:20px;font-size:11.7px;width:252px;text-align:left;">Marketings.pbix</div>
<svg style="position:absolute;left:635px;top:271px" width="14" height="14"><use href="#pcirc"/></svg>
<svg style="position:absolute;left:653px;top:271px" width="17" height="16"><use href="#open"/></svg>
<div class="t" style="left:672px;top:269px;height:20px;line-height:20px;font-size:11.7px;">Open</div>
<div style="left:215px;top:288px;width:1351px;height:20px;background:#fff;"></div>
<div style="left:336px;top:289px;width:1px;height:19px;background:#e6e6e6;"></div>
<div style="left:376px;top:289px;width:1px;height:19px;background:#e6e6e6;"></div>
<div style="left:632px;top:289px;width:1px;height:19px;background:#e6e6e6;"></div>
<div style="left:652px;top:289px;width:1px;height:19px;background:#e6e6e6;"></div>
<div style="left:717px;top:289px;width:63px;height:19px;background:#cfcfcf;"></div>
<div style="left:781px;top:289px;width:63px;height:19px;background:#cfcfcf;"></div>
<div class="t" style="left:844px;top:289px;height:20px;line-height:20px;font-size:11.7px;width:61px;text-align:right;">584KB</div>
<div style="left:909px;top:289px;width:63px;height:19px;background:#cfcfcf;"></div>
<div style="left:973px;top:289px;width:63px;height:19px;background:#cfcfcf;"></div>
<div class="t" style="left:1036px;top:289px;height:20px;line-height:20px;font-size:11.7px;width:125px;text-align:right;">08/May/2020 11:23</div>
<div style="left:1165px;top:289px;width:255px;height:19px;background:#cfcfcf;"></div>
<div class="t" style="left:1420px;top:289px;height:20px;line-height:20px;font-size:11.7px;width:125px;text-align:right;">03/Mar/2020 13:33</div>
<div style="left:1549px;top:289px;width:17px;height:19px;background:#cfcfcf;"></div>
<div style="left:215px;top:289px;width:101px;height:19px;background:#c7d6e6;"></div>
<div class="t" style="left:215px;top:289px;height:20px;line-height:20px;font-size:11.7px;width:97px;text-align:right;">1</div>
<svg style="position:absolute;left:319px;top:291px" width="14" height="15"><use href="#doc"/></svg>
<svg style="position:absolute;left:360px;top:290px" width="12" height="16"><use href="#fblank"/></svg>
<div class="t" style="left:378px;top:289px;height:20px;line-height:20px;font-size:11.7px;width:252px;text-align:left;">NC460 Sales Team.pbix</div>
<svg style="position:absolute;left:635px;top:291px" width="14" height="14"><use href="#pcirc"/></svg>
<svg style="position:absolute;left:653px;top:291px" width="17" height="16"><use href="#open"/></svg>
<div class="t" style="left:672px;top:289px;height:20px;line-height:20px;font-size:11.7px;">Open</div>
<div style="left:215px;top:308px;width:1351px;height:20px;background:#fff;"></div>
<div style="left:336px;top:309px;width:1px;height:19px;background:#e6e6e6;"></div>
<div style="left:376px;top:309px;width:1px;height:19px;background:#e6e6e6;"></div>
<div style="left:632px;top:309px;width:1px;height:19px;background:#e6e6e6;"></div>
<div style="left:652px;top:309px;width:1px;height:19px;background:#e6e6e6;"></div>
<div style="left:717px;top:309px;width:63px;height:19px;background:#cfcfcf;"></div>
<div style="left:781px;top:309px;width:63px;height:19px;background:#cfcfcf;"></div>
<div class="t" style="left:844px;top:309px;height:20px;line-height:20px;font-size:11.7px;width:61px;text-align:right;">7MB</div>
<div style="left:909px;top:309px;width:63px;height:19px;background:#cfcfcf;"></div>
<div style="left:973px;top:309px;width:63px;height:19px;background:#cfcfcf;"></div>
<div class="t" style="left:1036px;top:309px;height:20px;line-height:20px;font-size:11.7px;width:125px;text-align:right;">08/May/2020 11:23</div>
<div style="left:1165px;top:309px;width:255px;height:19px;background:#cfcfcf;"></div>
<div class="t" style="left:1420px;top:309px;height:20px;line-height:20px;font-size:11.7px;width:125px;text-align:right;">03/Mar/2020 13:33</div>
<div style="left:1549px;top:309px;width:17px;height:19px;background:#cfcfcf;"></div>
<div style="left:215px;top:309px;width:101px;height:19px;background:#c7d6e6;"></div>
<div class="t" style="left:215px;top:309px;height:20px;line-height:20px;font-size:11.7px;width:97px;text-align:right;">1</div>
<svg style="position:absolute;left:319px;top:311px" width="14" height="15"><use href="#doc"/></svg>
<svg style="position:absolute;left:360px;top:310px" width="12" height="16"><use href="#fblank"/></svg>
<div class="t" style="left:378px;top:309px;height:20px;line-height:20px;font-size:11.7px;width:252px;text-align:left;">Operations.pbix</div>
<svg style="position:absolute;left:635px;top:311px" width="14" height="14"><use href="#pcirc"/></svg>
<svg style="position:absolute;left:653px;top:311px" width="17" height="16"><use href="#open"/></svg>
<div class="t" style="left:672px;top:309px;height:20px;line-height:20px;font-size:11.7px;">Open</div>
<div style="left:215px;top:328px;width:1351px;height:20px;background:#fff;"></div>
<div style="left:336px;top:329px;width:1px;height:19px;background:#e6e6e6;"></div>
<div style="left:376px;top:329px;width:1px;height:19px;background:#e6e6e6;"></div>
<div style="left:632px;top:329px;width:1px;height:19px;background:#e6e6e6;"></div>
<div style="left:652px;top:329px;width:1px;height:19px;background:#e6e6e6;"></div>
<div style="left:717px;top:329px;width:63px;height:19px;background:#cfcfcf;"></div>
<div style="left:781px;top:329px;width:63px;height:19px;background:#cfcfcf;"></div>
<div class="t" style="left:844px;top:329px;height:20px;line-height:20px;font-size:11.7px;width:61px;text-align:right;">691KB</div>
<div style="left:909px;top:329px;width:63px;height:19px;background:#cfcfcf;"></div>
<div style="left:973px;top:329px;width:63px;height:19px;background:#cfcfcf;"></div>
<div class="t" style="left:1036px;top:329px;height:20px;line-height:20px;font-size:11.7px;width:125px;text-align:right;">08/May/2020 11:23</div>
<div style="left:1165px;top:329px;width:255px;height:19px;background:#cfcfcf;"></div>
<div class="t" style="left:1420px;top:329px;height:20px;line-height:20px;font-size:11.7px;width:125px;text-align:right;">03/Mar/2020 13:33</div>
<div style="left:1549px;top:329px;width:17px;height:19px;background:#cfcfcf;"></div>
<div style="left:215px;top:329px;width:101px;height:19px;background:#c7d6e6;"></div>
<div class="t" style="left:215px;top:329px;height:20px;line-height:20px;font-size:11.7px;width:97px;text-align:right;">1</div>
<svg style="position:absolute;left:319px;top:331px" width="14" height="15"><use href="#doc"/></svg>
<svg style="position:absolute;left:358px;top:330px" width="16" height="17"><use href="#fword"/></svg>
<div class="t" style="left:378px;top:329px;height:20px;line-height:20px;font-size:11.7px;width:252px;text-align:left;">Proposed_agenda_topics.docx</div>
<svg style="position:absolute;left:635px;top:331px" width="14" height="14"><use href="#pcirc"/></svg>
<svg style="position:absolute;left:653px;top:331px" width="17" height="16"><use href="#open"/></svg>
<div class="t" style="left:672px;top:329px;height:20px;line-height:20px;font-size:11.7px;">Open</div>
<div style="left:215px;top:348px;width:1351px;height:20px;background:#fff;"></div>
<div style="left:336px;top:349px;width:1px;height:19px;background:#e6e6e6;"></div>
<div style="left:376px;top:349px;width:1px;height:19px;background:#e6e6e6;"></div>
<div style="left:632px;top:349px;width:1px;height:19px;background:#e6e6e6;"></div>
<div style="left:652px;top:349px;width:1px;height:19px;background:#e6e6e6;"></div>
<div style="left:717px;top:349px;width:63px;height:19px;background:#cfcfcf;"></div>
<div style="left:781px;top:349px;width:63px;height:19px;background:#cfcfcf;"></div>
<div class="t" style="left:844px;top:349px;height:20px;line-height:20px;font-size:11.7px;width:61px;text-align:right;">2MB</div>
<div style="left:909px;top:349px;width:63px;height:19px;background:#cfcfcf;"></div>
<div style="left:973px;top:349px;width:63px;height:19px;background:#cfcfcf;"></div>
<div class="t" style="left:1036px;top:349px;height:20px;line-height:20px;font-size:11.7px;width:125px;text-align:right;">08/May/2020 11:23</div>
<div style="left:1165px;top:349px;width:255px;height:19px;background:#cfcfcf;"></div>
<div class="t" style="left:1420px;top:349px;height:20px;line-height:20px;font-size:11.7px;width:125px;text-align:right;">03/Mar/2020 13:33</div>
<div style="left:1549px;top:349px;width:17px;height:19px;background:#cfcfcf;"></div>
<div style="left:215px;top:349px;width:101px;height:19px;background:#c7d6e6;"></div>
<div class="t" style="left:215px;top:349px;height:20px;line-height:20px;font-size:11.7px;width:97px;text-align:right;">1</div>
<svg style="position:absolute;left:319px;top:351px" width="14" height="15"><use href="#doc"/></svg>
<svg style="position:absolute;left:360px;top:350px" width="12" height="16"><use href="#fblank"/></svg>
<div class="t" style="left:378px;top:349px;height:20px;line-height:20px;font-size:11.7px;width:252px;text-align:left;">Sales.pbix</div>
<svg style="position:absolute;left:635px;top:351px" width="14" height="14"><use href="#pcirc"/></svg>
<svg style="position:absolute;left:653px;top:351px" width="17" height="16"><use href="#open"/></svg>
<div class="t" style="left:672px;top:349px;height:20px;line-height:20px;font-size:11.7px;">Open</div>
<div style="left:215px;top:368px;width:1351px;height:20px;background:#fff;"></div>
<div style="left:336px;top:369px;width:1px;height:19px;background:#e6e6e6;"></div>
<div style="left:376px;top:369px;width:1px;height:19px;background:#e6e6e6;"></div>
<div style="left:632px;top:369px;width:1px;height:19px;background:#e6e6e6;"></div>
<div style="left:652px;top:369px;width:1px;height:19px;background:#e6e6e6;"></div>
<div style="left:717px;top:369px;width:63px;height:19px;background:#cfcfcf;"></div>
<div style="left:781px;top:369px;width:63px;height:19px;background:#cfcfcf;"></div>
<div class="t" style="left:844px;top:369px;height:20px;line-height:20px;font-size:11.7px;width:61px;text-align:right;">34KB</div>
<div style="left:909px;top:369px;width:63px;height:19px;background:#cfcfcf;"></div>
<div style="left:973px;top:369px;width:63px;height:19px;background:#cfcfcf;"></div>
<div class="t" style="left:1036px;top:369px;height:20px;line-height:20px;font-size:11.7px;width:125px;text-align:right;">08/May/2020 11:23</div>
<div style="left:1165px;top:369px;width:255px;height:19px;background:#cfcfcf;"></div>
<div class="t" style="left:1420px;top:369px;height:20px;line-height:20px;font-size:11.7px;width:125px;text-align:right;">03/Mar/2020 13:33</div>
<div style="left:1549px;top:369px;width:17px;height:19px;background:#cfcfcf;"></div>
<div style="left:215px;top:369px;width:101px;height:19px;background:#c7d6e6;"></div>
<div class="t" style="left:215px;top:369px;height:20px;line-height:20px;font-size:11.7px;width:97px;text-align:right;">1</div>
<svg style="position:absolute;left:319px;top:371px" width="14" height="15"><use href="#doc"/></svg>
<svg style="position:absolute;left:358px;top:370px" width="16" height="17"><use href="#fxls"/></svg>
<div class="t" style="left:378px;top:369px;height:20px;line-height:20px;font-size:11.7px;width:252px;text-align:left;">Texts in setvar.xls</div>
<svg style="position:absolute;left:635px;top:371px" width="14" height="14"><use href="#pcirc"/></svg>
<svg style="position:absolute;left:653px;top:371px" width="17" height="16"><use href="#open"/></svg>
<div class="t" style="left:672px;top:369px;height:20px;line-height:20px;font-size:11.7px;">Open</div>
<div style="left:215px;top:388px;width:1351px;height:20px;background:#fff;"></div>
<div style="left:336px;top:389px;width:1px;height:19px;background:#e6e6e6;"></div>
<div style="left:376px;top:389px;width:1px;height:19px;background:#e6e6e6;"></div>
<div style="left:632px;top:389px;width:1px;height:19px;background:#e6e6e6;"></div>
<div style="left:652px;top:389px;width:1px;height:19px;background:#e6e6e6;"></div>
<div style="left:717px;top:389px;width:63px;height:19px;background:#cfcfcf;"></div>
<div style="left:781px;top:389px;width:63px;height:19px;background:#cfcfcf;"></div>
<div class="t" style="left:844px;top:389px;height:20px;line-height:20px;font-size:11.7px;width:61px;text-align:right;">2MB</div>
<div style="left:909px;top:389px;width:63px;height:19px;background:#cfcfcf;"></div>
<div style="left:973px;top:389px;width:63px;height:19px;background:#cfcfcf;"></div>
<div class="t" style="left:1036px;top:389px;height:20px;line-height:20px;font-size:11.7px;width:125px;text-align:right;">08/May/2020 11:23</div>
<div style="left:1165px;top:389px;width:255px;height:19px;background:#cfcfcf;"></div>
<div class="t" style="left:1420px;top:389px;height:20px;line-height:20px;font-size:11.7px;width:125px;text-align:right;">03/Mar/2020 13:33</div>
<div style="left:1549px;top:389px;width:17px;height:19px;background:#cfcfcf;"></div>
<div style="left:215px;top:389px;width:101px;height:19px;background:#c7d6e6;"></div>
<div class="t" style="left:215px;top:389px;height:20px;line-height:20px;font-size:11.7px;width:97px;text-align:right;">1</div>
<svg style="position:absolute;left:319px;top:391px" width="14" height="15"><use href="#doc"/></svg>
<svg style="position:absolute;left:360px;top:390px" width="12" height="16"><use href="#fblank"/></svg>
<div class="t" style="left:378px;top:389px;height:20px;line-height:20px;font-size:11.7px;width:252px;text-align:left;">X1050 Launch Team.pbix</div>
<svg style="position:absolute;left:635px;top:391px" width="14" height="14"><use href="#pcirc"/></svg>
<svg style="position:absolute;left:653px;top:391px" width="17" height="16"><use href="#open"/></svg>
<div class="t" style="left:672px;top:389px;height:20px;line-height:20px;font-size:11.7px;">Open</div>
<div style="left:215px;top:408px;width:1351px;height:20px;background:#fff;"></div>
<div class="t" style="left:716px;top:409px;height:20px;line-height:20px;font-size:11.7px;font-weight:700;width:61px;text-align:right;">1</div>
<div class="t" style="left:780px;top:409px;height:20px;line-height:20px;font-size:11.7px;font-weight:700;width:61px;text-align:right;">1</div>
<div style="left:844px;top:409px;width:64px;height:19px;background:#cfcfcf;"></div>
<div style="left:908px;top:409px;width:64px;height:19px;background:#cfcfcf;"></div>
<div style="left:972px;top:409px;width:64px;height:19px;background:#cfcfcf;"></div>
<div class="t" style="left:1036px;top:409px;height:20px;line-height:20px;font-size:11.7px;font-weight:700;width:125px;text-align:right;">03/Mar/2020 16:00</div>
<div class="t" style="left:1166px;top:409px;height:20px;line-height:20px;font-size:11.7px;font-weight:700;width:254px;text-align:left;">MOD Administrator</div>
<div class="t" style="left:1420px;top:409px;height:20px;line-height:20px;font-size:11.7px;font-weight:700;width:125px;text-align:right;">03/Mar/2020 16:00</div>
<div class="t" style="left:1550px;top:409px;height:20px;line-height:20px;font-size:11.7px;font-weight:700;width:16px;text-align:left;">MC</div>
<div style="left:215px;top:409px;width:101px;height:19px;background:#8fa5bf;"></div>
<svg style="position:absolute;left:220px;top:411px" width="16" height="16"><use href="#expm"/></svg>
<div class="t" style="left:215px;top:409px;height:20px;line-height:20px;font-size:11.7px;font-weight:700;width:97px;text-align:right;">1</div>
<svg style="position:absolute;left:318px;top:412px" width="15" height="12"><use href="#bfold"/></svg>
<svg style="position:absolute;left:359px;top:410px" width="15" height="17"><use href="#yfold"/></svg>
<div class="t" style="left:378px;top:409px;height:20px;line-height:20px;font-size:11.7px;font-weight:700;width:252px;text-align:left;">Feedback</div>
<svg style="position:absolute;left:635px;top:411px" width="14" height="14"><use href="#pcirc"/></svg>
<svg style="position:absolute;left:653px;top:411px" width="17" height="16"><use href="#open"/></svg>
<div class="t" style="left:672px;top:409px;height:20px;line-height:20px;font-size:11.7px;font-weight:700;">Open</div>
<div style="left:215px;top:428px;width:1351px;height:20px;background:#fff;"></div>
<div class="t" style="left:716px;top:429px;height:20px;line-height:20px;font-size:11.7px;font-weight:700;width:61px;text-align:right;">1</div>
<div style="left:780px;top:429px;width:64px;height:19px;background:#cfcfcf;"></div>
<div style="left:844px;top:429px;width:64px;height:19px;background:#cfcfcf;"></div>
<div class="t" style="left:932px;top:429px;height:20px;line-height:20px;font-size:11.7px;font-weight:700;">5KB</div>
<div class="t" style="left:972px;top:429px;height:20px;line-height:20px;font-size:11.7px;font-weight:700;width:61px;text-align:right;">5KB</div>
<div class="t" style="left:1036px;top:429px;height:20px;line-height:20px;font-size:11.7px;font-weight:700;width:125px;text-align:right;">03/Mar/2020 16:00</div>
<div class="t" style="left:1166px;top:429px;height:20px;line-height:20px;font-size:11.7px;font-weight:700;width:254px;text-align:left;">MOD Administrator</div>
<div class="t" style="left:1420px;top:429px;height:20px;line-height:20px;font-size:11.7px;font-weight:700;width:125px;text-align:right;">03/Mar/2020 16:00</div>
<div class="t" style="left:1550px;top:429px;height:20px;line-height:20px;font-size:11.7px;font-weight:700;width:16px;text-align:left;">MC</div>
<div style="left:234px;top:429px;width:82px;height:19px;background:#8fa5bf;"></div>
<svg style="position:absolute;left:239px;top:431px" width="16" height="16"><use href="#expm"/></svg>
<div class="t" style="left:215px;top:429px;height:20px;line-height:20px;font-size:11.7px;font-weight:700;width:97px;text-align:right;">2</div>
<svg style="position:absolute;left:318px;top:432px" width="15" height="12"><use href="#bfold"/></svg>
<svg style="position:absolute;left:359px;top:430px" width="15" height="17"><use href="#yfold"/></svg>
<div class="t" style="left:378px;top:429px;height:20px;line-height:20px;font-size:11.7px;font-weight:700;width:252px;text-align:left;">{532AB44C-BC75-4850-8BCE-1FB5DE00BE7E}</div>
<svg style="position:absolute;left:635px;top:431px" width="14" height="14"><use href="#pcirc"/></svg>
<svg style="position:absolute;left:653px;top:431px" width="17" height="16"><use href="#open"/></svg>
<div class="t" style="left:672px;top:429px;height:20px;line-height:20px;font-size:11.7px;font-weight:700;">Open</div>
<div style="left:215px;top:448px;width:1351px;height:20px;background:#fff;"></div>
<div style="left:336px;top:449px;width:1px;height:19px;background:#e6e6e6;"></div>
<div style="left:376px;top:449px;width:1px;height:19px;background:#e6e6e6;"></div>
<div style="left:632px;top:449px;width:1px;height:19px;background:#e6e6e6;"></div>
<div style="left:652px;top:449px;width:1px;height:19px;background:#e6e6e6;"></div>
<div style="left:717px;top:449px;width:63px;height:19px;background:#cfcfcf;"></div>
<div style="left:781px;top:449px;width:63px;height:19px;background:#cfcfcf;"></div>
<div class="t" style="left:844px;top:449px;height:20px;line-height:20px;font-size:11.7px;width:61px;text-align:right;">573KB</div>
<div style="left:909px;top:449px;width:63px;height:19px;background:#cfcfcf;"></div>
<div style="left:973px;top:449px;width:63px;height:19px;background:#cfcfcf;"></div>
<div class="t" style="left:1036px;top:449px;height:20px;line-height:20px;font-size:11.7px;width:125px;text-align:right;">08/May/2020 11:23</div>
<div style="left:1165px;top:449px;width:255px;height:19px;background:#cfcfcf;"></div>
<div class="t" style="left:1420px;top:449px;height:20px;line-height:20px;font-size:11.7px;width:125px;text-align:right;">03/Mar/2020 13:33</div>
<div style="left:1549px;top:449px;width:17px;height:19px;background:#cfcfcf;"></div>
<div style="left:253px;top:449px;width:63px;height:19px;background:#c7d6e6;"></div>
<div class="t" style="left:215px;top:449px;height:20px;line-height:20px;font-size:11.7px;width:97px;text-align:right;">3</div>
<svg style="position:absolute;left:319px;top:451px" width="14" height="15"><use href="#doc"/></svg>
<svg style="position:absolute;left:360px;top:450px" width="12" height="16"><use href="#fimg"/></svg>
<div class="t" style="left:378px;top:449px;height:20px;line-height:20px;font-size:11.7px;width:252px;text-align:left;">Capture001.png</div>
<svg style="position:absolute;left:635px;top:451px" width="14" height="14"><use href="#pcirc"/></svg>
<svg style="position:absolute;left:653px;top:451px" width="17" height="16"><use href="#open"/></svg>
<div class="t" style="left:672px;top:449px;height:20px;line-height:20px;font-size:11.7px;">Open</div>
<div style="left:215px;top:468px;width:1351px;height:20px;background:#fff;"></div>
<div class="t" style="left:716px;top:469px;height:20px;line-height:20px;font-size:11.7px;font-weight:700;width:61px;text-align:right;">4</div>
<div class="t" style="left:780px;top:469px;height:20px;line-height:20px;font-size:11.7px;font-weight:700;width:61px;text-align:right;">1</div>
<div style="left:844px;top:469px;width:64px;height:19px;background:#cfcfcf;"></div>
<div style="left:908px;top:469px;width:64px;height:19px;background:#cfcfcf;"></div>
<div style="left:972px;top:469px;width:64px;height:19px;background:#cfcfcf;"></div>
<div class="t" style="left:1036px;top:469px;height:20px;line-height:20px;font-size:11.7px;font-weight:700;width:125px;text-align:right;">03/Mar/2020 16:00</div>
<div class="t" style="left:1166px;top:469px;height:20px;line-height:20px;font-size:11.7px;font-weight:700;width:254px;text-align:left;">MOD Administrator</div>
<div class="t" style="left:1420px;top:469px;height:20px;line-height:20px;font-size:11.7px;font-weight:700;width:125px;text-align:right;">03/Mar/2020 16:00</div>
<div class="t" style="left:1550px;top:469px;height:20px;line-height:20px;font-size:11.7px;font-weight:700;width:16px;text-align:left;">MC</div>
<div style="left:215px;top:469px;width:101px;height:19px;background:#8fa5bf;"></div>
<svg style="position:absolute;left:220px;top:471px" width="16" height="16"><use href="#expm"/></svg>
<div class="t" style="left:215px;top:469px;height:20px;line-height:20px;font-size:11.7px;font-weight:700;width:97px;text-align:right;">1</div>
<svg style="position:absolute;left:318px;top:472px" width="15" height="12"><use href="#bfold"/></svg>
<svg style="position:absolute;left:359px;top:470px" width="15" height="17"><use href="#yfold"/></svg>
<div class="t" style="left:378px;top:469px;height:20px;line-height:20px;font-size:11.7px;font-weight:700;width:252px;text-align:left;">Folder</div>
<svg style="position:absolute;left:635px;top:471px" width="14" height="14"><use href="#pcirc"/></svg>
<svg style="position:absolute;left:653px;top:471px" width="17" height="16"><use href="#open"/></svg>
<div class="t" style="left:672px;top:469px;height:20px;line-height:20px;font-size:11.7px;font-weight:700;">Open</div>
<div style="left:215px;top:488px;width:1351px;height:20px;background:#fff;"></div>
<div class="t" style="left:716px;top:489px;height:20px;line-height:20px;font-size:11.7px;font-weight:700;width:61px;text-align:right;">4</div>
<div style="left:780px;top:489px;width:64px;height:19px;background:#cfcfcf;"></div>
<div style="left:844px;top:489px;width:64px;height:19px;background:#cfcfcf;"></div>
<div class="t" style="left:932px;top:489px;height:20px;line-height:20px;font-size:11.7px;font-weight:700;">5KB</div>
<div class="t" style="left:972px;top:489px;height:20px;line-height:20px;font-size:11.7px;font-weight:700;width:61px;text-align:right;">5KB</div>
<div class="t" style="left:1036px;top:489px;height:20px;line-height:20px;font-size:11.7px;font-weight:700;width:125px;text-align:right;">03/Mar/2020 16:00</div>
<div class="t" style="left:1166px;top:489px;height:20px;line-height:20px;font-size:11.7px;font-weight:700;width:254px;text-align:left;">MOD Administrator</div>
<div class="t" style="left:1420px;top:489px;height:20px;line-height:20px;font-size:11.7px;font-weight:700;width:125px;text-align:right;">03/Mar/2020 16:00</div>
<div class="t" style="left:1550px;top:489px;height:20px;line-height:20px;font-size:11.7px;font-weight:700;width:16px;text-align:left;">MC</div>
<div style="left:234px;top:489px;width:82px;height:19px;background:#8fa5bf;"></div>
<svg style="position:absolute;left:239px;top:491px" width="16" height="16"><use href="#expm"/></svg>
<div class="t" style="left:215px;top:489px;height:20px;line-height:20px;font-size:11.7px;font-weight:700;width:97px;text-align:right;">2</div>
<svg style="position:absolute;left:318px;top:492px" width="15" height="12"><use href="#bfold"/></svg>
<svg style="position:absolute;left:359px;top:490px" width="15" height="17"><use href="#yfold"/></svg>
<div class="t" style="left:378px;top:489px;height:20px;line-height:20px;font-size:11.7px;font-weight:700;width:252px;text-align:left;">2017-09-08 14.48.13</div>
<svg style="position:absolute;left:635px;top:491px" width="14" height="14"><use href="#pcirc"/></svg>
<svg style="position:absolute;left:653px;top:491px" width="17" height="16"><use href="#open"/></svg>
<div class="t" style="left:672px;top:489px;height:20px;line-height:20px;font-size:11.7px;font-weight:700;">Open</div>
<div style="left:215px;top:508px;width:1351px;height:20px;background:#fff;"></div>
<div style="left:336px;top:509px;width:1px;height:19px;background:#e6e6e6;"></div>
<div style="left:376px;top:509px;width:1px;height:19px;background:#e6e6e6;"></div>
<div style="left:632px;top:509px;width:1px;height:19px;background:#e6e6e6;"></div>
<div style="left:652px;top:509px;width:1px;height:19px;background:#e6e6e6;"></div>
<div style="left:717px;top:509px;width:63px;height:19px;background:#cfcfcf;"></div>
<div style="left:781px;top:509px;width:63px;height:19px;background:#cfcfcf;"></div>
<div class="t" style="left:844px;top:509px;height:20px;line-height:20px;font-size:11.7px;width:61px;text-align:right;">137KB</div>
<div style="left:909px;top:509px;width:63px;height:19px;background:#cfcfcf;"></div>
<div style="left:973px;top:509px;width:63px;height:19px;background:#cfcfcf;"></div>
<div class="t" style="left:1036px;top:509px;height:20px;line-height:20px;font-size:11.7px;width:125px;text-align:right;">08/May/2020 11:23</div>
<div style="left:1165px;top:509px;width:255px;height:19px;background:#cfcfcf;"></div>
<div class="t" style="left:1420px;top:509px;height:20px;line-height:20px;font-size:11.7px;width:125px;text-align:right;">03/Mar/2020 13:33</div>
<div style="left:1549px;top:509px;width:17px;height:19px;background:#cfcfcf;"></div>
<div style="left:253px;top:509px;width:63px;height:19px;background:#c7d6e6;"></div>
<div class="t" style="left:215px;top:509px;height:20px;line-height:20px;font-size:11.7px;width:97px;text-align:right;">3</div>
<svg style="position:absolute;left:319px;top:511px" width="14" height="15"><use href="#doc"/></svg>
<svg style="position:absolute;left:360px;top:510px" width="12" height="16"><use href="#faudio"/></svg>
<div class="t" style="left:378px;top:509px;height:20px;line-height:20px;font-size:11.7px;width:252px;text-align:left;">audio_only.m4a</div>
<svg style="position:absolute;left:635px;top:511px" width="14" height="14"><use href="#pcirc"/></svg>
<svg style="position:absolute;left:653px;top:511px" width="17" height="16"><use href="#open"/></svg>
<div class="t" style="left:672px;top:509px;height:20px;line-height:20px;font-size:11.7px;">Open</div>
<div style="left:215px;top:528px;width:1351px;height:20px;background:#fff;"></div>
<div style="left:336px;top:529px;width:1px;height:19px;background:#e6e6e6;"></div>
<div style="left:376px;top:529px;width:1px;height:19px;background:#e6e6e6;"></div>
<div style="left:632px;top:529px;width:1px;height:19px;background:#e6e6e6;"></div>
<div style="left:652px;top:529px;width:1px;height:19px;background:#e6e6e6;"></div>
<div style="left:717px;top:529px;width:63px;height:19px;background:#cfcfcf;"></div>
<div style="left:781px;top:529px;width:63px;height:19px;background:#cfcfcf;"></div>
<div class="t" style="left:844px;top:529px;height:20px;line-height:20px;font-size:11.7px;width:61px;text-align:right;">1KB</div>
<div style="left:909px;top:529px;width:63px;height:19px;background:#cfcfcf;"></div>
<div style="left:973px;top:529px;width:63px;height:19px;background:#cfcfcf;"></div>
<div class="t" style="left:1036px;top:529px;height:20px;line-height:20px;font-size:11.7px;width:125px;text-align:right;">08/May/2020 11:23</div>
<div style="left:1165px;top:529px;width:255px;height:19px;background:#cfcfcf;"></div>
<div class="t" style="left:1420px;top:529px;height:20px;line-height:20px;font-size:11.7px;width:125px;text-align:right;">03/Mar/2020 16:00</div>
<div style="left:1548px;top:529px;width:1px;height:19px;background:#e6e6e6;"></div>
<div class="t" style="left:1550px;top:529px;height:20px;line-height:20px;font-size:11.7px;width:16px;text-align:left;">MC</div>
<div style="left:253px;top:529px;width:63px;height:19px;background:#c7d6e6;"></div>
<div class="t" style="left:215px;top:529px;height:20px;line-height:20px;font-size:11.7px;width:97px;text-align:right;">3</div>
<svg style="position:absolute;left:319px;top:531px" width="14" height="15"><use href="#doc"/></svg>
<svg style="position:absolute;left:357px;top:530px" width="17" height="17"><use href="#fnote"/></svg>
<div class="t" style="left:378px;top:529px;height:20px;line-height:20px;font-size:11.7px;width:252px;text-align:left;">MainFrame-048-ShowMessageRulesForwarding.txt</div>
<svg style="position:absolute;left:635px;top:531px" width="14" height="14"><use href="#pcirc"/></svg>
<svg style="position:absolute;left:653px;top:531px" width="17" height="16"><use href="#open"/></svg>
<div class="t" style="left:672px;top:529px;height:20px;line-height:20px;font-size:11.7px;">Open</div>
<div style="left:215px;top:548px;width:1351px;height:20px;background:#fff;"></div>
<div style="left:336px;top:549px;width:1px;height:19px;background:#e6e6e6;"></div>
<div style="left:376px;top:549px;width:1px;height:19px;background:#e6e6e6;"></div>
<div style="left:632px;top:549px;width:1px;height:19px;background:#e6e6e6;"></div>
<div style="left:652px;top:549px;width:1px;height:19px;background:#e6e6e6;"></div>
<div style="left:717px;top:549px;width:63px;height:19px;background:#cfcfcf;"></div>
<div style="left:781px;top:549px;width:63px;height:19px;background:#cfcfcf;"></div>
<div class="t" style="left:844px;top:549px;height:20px;line-height:20px;font-size:11.7px;width:61px;text-align:right;">92B</div>
<div style="left:909px;top:549px;width:63px;height:19px;background:#cfcfcf;"></div>
<div style="left:973px;top:549px;width:63px;height:19px;background:#cfcfcf;"></div>
<div class="t" style="left:1036px;top:549px;height:20px;line-height:20px;font-size:11.7px;width:125px;text-align:right;">08/May/2020 11:23</div>
<div style="left:1165px;top:549px;width:255px;height:19px;background:#cfcfcf;"></div>
<div class="t" style="left:1420px;top:549px;height:20px;line-height:20px;font-size:11.7px;width:125px;text-align:right;">03/Mar/2020 13:33</div>
<div style="left:1549px;top:549px;width:17px;height:19px;background:#cfcfcf;"></div>
<div style="left:253px;top:549px;width:63px;height:19px;background:#c7d6e6;"></div>
<div class="t" style="left:215px;top:549px;height:20px;line-height:20px;font-size:11.7px;width:97px;text-align:right;">3</div>
<svg style="position:absolute;left:319px;top:551px" width="14" height="15"><use href="#doc"/></svg>
<svg style="position:absolute;left:360px;top:550px" width="12" height="16"><use href="#faudio"/></svg>
<div class="t" style="left:378px;top:549px;height:20px;line-height:20px;font-size:11.7px;width:252px;text-align:left;">playback.m3u</div>
<svg style="position:absolute;left:635px;top:551px" width="14" height="14"><use href="#pcirc"/></svg>
<svg style="position:absolute;left:653px;top:551px" width="17" height="16"><use href="#open"/></svg>
<div class="t" style="left:672px;top:549px;height:20px;line-height:20px;font-size:11.7px;">Open</div>
<div style="left:215px;top:568px;width:1351px;height:20px;background:#fff;"></div>
<div style="left:336px;top:569px;width:1px;height:19px;background:#e6e6e6;"></div>
<div style="left:376px;top:569px;width:1px;height:19px;background:#e6e6e6;"></div>
<div style="left:632px;top:569px;width:1px;height:19px;background:#e6e6e6;"></div>
<div style="left:652px;top:569px;width:1px;height:19px;background:#e6e6e6;"></div>
<div style="left:717px;top:569px;width:63px;height:19px;background:#cfcfcf;"></div>
<div style="left:781px;top:569px;width:63px;height:19px;background:#cfcfcf;"></div>
<div class="t" style="left:844px;top:569px;height:20px;line-height:20px;font-size:11.7px;width:61px;text-align:right;">453KB</div>
<div style="left:909px;top:569px;width:63px;height:19px;background:#cfcfcf;"></div>
<div style="left:973px;top:569px;width:63px;height:19px;background:#cfcfcf;"></div>
<div class="t" style="left:1036px;top:569px;height:20px;line-height:20px;font-size:11.7px;width:125px;text-align:right;">08/May/2020 11:23</div>
<div style="left:1165px;top:569px;width:255px;height:19px;background:#cfcfcf;"></div>
<div class="t" style="left:1420px;top:569px;height:20px;line-height:20px;font-size:11.7px;width:125px;text-align:right;">03/Mar/2020 13:33</div>
<div style="left:1549px;top:569px;width:17px;height:19px;background:#cfcfcf;"></div>
<div style="left:253px;top:569px;width:63px;height:19px;background:#c7d6e6;"></div>
<div class="t" style="left:215px;top:569px;height:20px;line-height:20px;font-size:11.7px;width:97px;text-align:right;">3</div>
<svg style="position:absolute;left:319px;top:571px" width="14" height="15"><use href="#doc"/></svg>
<svg style="position:absolute;left:360px;top:570px" width="12" height="16"><use href="#fvideo"/></svg>
<div class="t" style="left:378px;top:569px;height:20px;line-height:20px;font-size:11.7px;width:252px;text-align:left;">zoom_0.mp4</div>
<svg style="position:absolute;left:635px;top:571px" width="14" height="14"><use href="#pcirc"/></svg>
<svg style="position:absolute;left:653px;top:571px" width="17" height="16"><use href="#open"/></svg>
<div class="t" style="left:672px;top:569px;height:20px;line-height:20px;font-size:11.7px;">Open</div>
<div style="left:215px;top:588px;width:1351px;height:20px;background:#fff;"></div>
<div style="left:336px;top:589px;width:1px;height:19px;background:#e6e6e6;"></div>
<div style="left:376px;top:589px;width:1px;height:19px;background:#e6e6e6;"></div>
<div style="left:632px;top:589px;width:1px;height:19px;background:#e6e6e6;"></div>
<div style="left:652px;top:589px;width:1px;height:19px;background:#e6e6e6;"></div>
<div style="left:717px;top:589px;width:63px;height:19px;background:#cfcfcf;"></div>
<div style="left:781px;top:589px;width:63px;height:19px;background:#cfcfcf;"></div>
<div style="left:845px;top:589px;width:63px;height:19px;background:#cfcfcf;"></div>
<div style="left:909px;top:589px;width:63px;height:19px;background:#cfcfcf;"></div>
<div style="left:973px;top:589px;width:63px;height:19px;background:#cfcfcf;"></div>
<div class="t" style="left:1036px;top:589px;height:20px;line-height:20px;font-size:11.7px;width:125px;text-align:right;">21/May/2020 20:03</div>
<div style="left:1164px;top:589px;width:1px;height:19px;background:#e6e6e6;"></div>
<div class="t" style="left:1166px;top:589px;height:20px;line-height:20px;font-size:11.7px;width:254px;text-align:left;">MOD Administrator</div>
<div style="left:1420px;top:589px;width:1px;height:19px;background:#e6e6e6;"></div>
<div class="t" style="left:1420px;top:589px;height:20px;line-height:20px;font-size:11.7px;width:125px;text-align:right;">21/May/2020 20:03</div>
<div style="left:1548px;top:589px;width:1px;height:19px;background:#e6e6e6;"></div>
<div class="t" style="left:1550px;top:589px;height:20px;line-height:20px;font-size:11.7px;width:16px;text-align:left;">MC</div>
<div style="left:215px;top:589px;width:101px;height:19px;background:#8fa5bf;"></div>
<svg style="position:absolute;left:220px;top:591px" width="16" height="16"><use href="#leaf"/></svg>
<div class="t" style="left:215px;top:589px;height:20px;line-height:20px;font-size:11.7px;width:97px;text-align:right;">1</div>
<svg style="position:absolute;left:318px;top:592px" width="15" height="12"><use href="#bfold"/></svg>
<svg style="position:absolute;left:359px;top:590px" width="15" height="17"><use href="#yfold"/></svg>
<div class="t" style="left:378px;top:589px;height:20px;line-height:20px;font-size:11.7px;width:252px;text-align:left;">jjj</div>
<svg style="position:absolute;left:635px;top:591px" width="14" height="14"><use href="#pcirc"/></svg>
<svg style="position:absolute;left:653px;top:591px" width="17" height="16"><use href="#open"/></svg>
<div class="t" style="left:672px;top:589px;height:20px;line-height:20px;font-size:11.7px;">Open</div>
<div style="left:215px;top:608px;width:1351px;height:20px;background:#fff;"></div>
<div style="left:336px;top:609px;width:1px;height:19px;background:#e6e6e6;"></div>
<div style="left:376px;top:609px;width:1px;height:19px;background:#e6e6e6;"></div>
<div style="left:632px;top:609px;width:1px;height:19px;background:#e6e6e6;"></div>
<div style="left:652px;top:609px;width:1px;height:19px;background:#e6e6e6;"></div>
<div style="left:717px;top:609px;width:63px;height:19px;background:#cfcfcf;"></div>
<div style="left:781px;top:609px;width:63px;height:19px;background:#cfcfcf;"></div>
<div style="left:845px;top:609px;width:63px;height:19px;background:#cfcfcf;"></div>
<div style="left:909px;top:609px;width:63px;height:19px;background:#cfcfcf;"></div>
<div style="left:973px;top:609px;width:63px;height:19px;background:#cfcfcf;"></div>
<div class="t" style="left:1036px;top:609px;height:20px;line-height:20px;font-size:11.7px;width:125px;text-align:right;">24/May/2020 09:01</div>
<div style="left:1165px;top:609px;width:255px;height:19px;background:#cfcfcf;"></div>
<div class="t" style="left:1420px;top:609px;height:20px;line-height:20px;font-size:11.7px;width:125px;text-align:right;">24/May/2020 09:01</div>
<div style="left:1549px;top:609px;width:17px;height:19px;background:#cfcfcf;"></div>
<div style="left:215px;top:609px;width:101px;height:19px;background:#8fa5bf;"></div>
<svg style="position:absolute;left:220px;top:611px" width="16" height="16"><use href="#leaf"/></svg>
<div class="t" style="left:215px;top:609px;height:20px;line-height:20px;font-size:11.7px;width:97px;text-align:right;">1</div>
<svg style="position:absolute;left:318px;top:612px" width="15" height="12"><use href="#bfold"/></svg>
<svg style="position:absolute;left:359px;top:610px" width="15" height="17"><use href="#yfold"/></svg>
<div class="t" style="left:378px;top:609px;height:20px;line-height:20px;font-size:11.7px;width:252px;text-align:left;">One</div>
<svg style="position:absolute;left:635px;top:611px" width="14" height="14"><use href="#pcirc"/></svg>
<svg style="position:absolute;left:653px;top:611px" width="17" height="16"><use href="#open"/></svg>
<div class="t" style="left:672px;top:609px;height:20px;line-height:20px;font-size:11.7px;">Open</div>
<div style="left:215px;top:628px;width:1351px;height:20px;background:#fff;"></div>
<div class="t" style="left:716px;top:629px;height:20px;line-height:20px;font-size:11.7px;font-weight:700;width:61px;text-align:right;">4</div>
<div class="t" style="left:780px;top:629px;height:20px;line-height:20px;font-size:11.7px;font-weight:700;width:61px;text-align:right;">2</div>
<div style="left:844px;top:629px;width:64px;height:19px;background:#cfcfcf;"></div>
<div style="left:908px;top:629px;width:64px;height:19px;background:#cfcfcf;"></div>
<div class="t" style="left:972px;top:629px;height:20px;line-height:20px;font-size:11.7px;font-weight:700;width:61px;text-align:right;">38KB</div>
<div class="t" style="left:1052.69px;top:629px;height:20px;line-height:20px;font-size:11.7px;color:#000;font-weight:700;transform-origin:0 0;transform:scaleX(1.0845);overflow:visible;">03/Mar/2020 16:20</div>
<div class="t" style="left:1166px;top:629px;height:20px;line-height:20px;font-size:11.7px;font-weight:700;width:254px;text-align:left;">MOD Administrator</div>
<div class="t" style="left:1437.09px;top:629px;height:20px;line-height:20px;font-size:11.7px;color:#000;font-weight:700;transform-origin:0 0;transform:scaleX(1.0835);overflow:visible;">03/Mar/2020 16:20</div>
<div class="t" style="left:1550px;top:629px;height:20px;line-height:20px;font-size:11.7px;font-weight:700;width:16px;text-align:left;">MC</div>
<div style="left:215px;top:629px;width:101px;height:19px;background:#8fa5bf;"></div>
<svg style="position:absolute;left:220px;top:631px" width="16" height="16"><use href="#expm"/></svg>
<div class="t" style="left:215px;top:629px;height:20px;line-height:20px;font-size:11.7px;font-weight:700;width:97px;text-align:right;">1</div>
<svg style="position:absolute;left:318px;top:632px" width="15" height="12"><use href="#bfold"/></svg>
<svg style="position:absolute;left:359px;top:630px" width="15" height="17"><use href="#yfold"/></svg>
<div class="t" style="left:378px;top:629px;height:20px;line-height:20px;font-size:11.7px;font-weight:700;width:252px;text-align:left;">WindowsPowerShell</div>
<svg style="position:absolute;left:635px;top:631px" width="14" height="14"><use href="#pcirc"/></svg>
<svg style="position:absolute;left:653px;top:631px" width="17" height="16"><use href="#open"/></svg>
<div class="t" style="left:672px;top:629px;height:20px;line-height:20px;font-size:11.7px;font-weight:700;">Open</div>
<div style="left:215px;top:648px;width:1351px;height:20px;background:#fff;"></div>
<div class="t" style="left:716px;top:649px;height:20px;line-height:20px;font-size:11.7px;font-weight:700;width:61px;text-align:right;">4</div>
<div class="t" style="left:780px;top:649px;height:20px;line-height:20px;font-size:11.7px;font-weight:700;width:61px;text-align:right;">1</div>
<div style="left:844px;top:649px;width:64px;height:19px;background:#cfcfcf;"></div>
<div style="left:908px;top:649px;width:64px;height:19px;background:#cfcfcf;"></div>
<div class="t" style="left:972px;top:649px;height:20px;line-height:20px;font-size:11.7px;font-weight:700;width:61px;text-align:right;">38KB</div>
<div class="t" style="left:1052.69px;top:649px;height:20px;line-height:20px;font-size:11.7px;color:#000;font-weight:700;transform-origin:0 0;transform:scaleX(1.0845);overflow:visible;">03/Mar/2020 16:20</div>
<div class="t" style="left:1166px;top:649px;height:20px;line-height:20px;font-size:11.7px;font-weight:700;width:254px;text-align:left;">MOD Administrator</div>
<div class="t" style="left:1437.09px;top:649px;height:20px;line-height:20px;font-size:11.7px;color:#000;font-weight:700;transform-origin:0 0;transform:scaleX(1.0835);overflow:visible;">03/Mar/2020 16:20</div>
<div class="t" style="left:1550px;top:649px;height:20px;line-height:20px;font-size:11.7px;font-weight:700;width:16px;text-align:left;">MC</div>
<div style="left:234px;top:649px;width:82px;height:19px;background:#8fa5bf;"></div>
<svg style="position:absolute;left:239px;top:651px" width="16" height="16"><use href="#expm"/></svg>
<div class="t" style="left:215px;top:649px;height:20px;line-height:20px;font-size:11.7px;font-weight:700;width:97px;text-align:right;">2</div>
<svg style="position:absolute;left:318px;top:652px" width="15" height="12"><use href="#bfold"/></svg>
<svg style="position:absolute;left:359px;top:650px" width="15" height="17"><use href="#yfold"/></svg>
<div class="t" style="left:378px;top:649px;height:20px;line-height:20px;font-size:11.7px;font-weight:700;width:252px;text-align:left;">Scripts</div>
<svg style="position:absolute;left:635px;top:651px" width="14" height="14"><use href="#pcirc"/></svg>
<svg style="position:absolute;left:653px;top:651px" width="17" height="16"><use href="#open"/></svg>
<div class="t" style="left:672px;top:649px;height:20px;line-height:20px;font-size:11.7px;font-weight:700;">Open</div>
<div style="left:215px;top:668px;width:1351px;height:20px;background:#fff;"></div>
<div class="t" style="left:716px;top:669px;height:20px;line-height:20px;font-size:11.7px;font-weight:700;width:61px;text-align:right;">4</div>
<div style="left:780px;top:669px;width:64px;height:19px;background:#cfcfcf;"></div>
<div style="left:844px;top:669px;width:64px;height:19px;background:#cfcfcf;"></div>
<div class="t" style="left:908px;top:669px;height:20px;line-height:20px;font-size:11.7px;font-weight:700;width:61px;text-align:right;">38KB</div>
<div class="t" style="left:972px;top:669px;height:20px;line-height:20px;font-size:11.7px;font-weight:700;width:61px;text-align:right;">38KB</div>
<div class="t" style="left:1052.69px;top:669px;height:20px;line-height:20px;font-size:11.7px;color:#000;font-weight:700;transform-origin:0 0;transform:scaleX(1.0845);overflow:visible;">03/Mar/2020 16:20</div>
<div class="t" style="left:1166px;top:669px;height:20px;line-height:20px;font-size:11.7px;font-weight:700;width:254px;text-align:left;">MOD Administrator</div>
<div class="t" style="left:1437.09px;top:669px;height:20px;line-height:20px;font-size:11.7px;color:#000;font-weight:700;transform-origin:0 0;transform:scaleX(1.0835);overflow:visible;">03/Mar/2020 16:20</div>
<div class="t" style="left:1550px;top:669px;height:20px;line-height:20px;font-size:11.7px;font-weight:700;width:16px;text-align:left;">MC</div>
<div style="left:253px;top:669px;width:63px;height:19px;background:#8fa5bf;"></div>
<svg style="position:absolute;left:258px;top:671px" width="16" height="16"><use href="#expm"/></svg>
<div class="t" style="left:215px;top:669px;height:20px;line-height:20px;font-size:11.7px;font-weight:700;width:97px;text-align:right;">3</div>
<svg style="position:absolute;left:318px;top:672px" width="15" height="12"><use href="#bfold"/></svg>
<svg style="position:absolute;left:359px;top:670px" width="15" height="17"><use href="#yfold"/></svg>
<div class="t" style="left:378px;top:669px;height:20px;line-height:20px;font-size:11.7px;font-weight:700;width:252px;text-align:left;">InstalledScriptInfos</div>
<svg style="position:absolute;left:635px;top:671px" width="14" height="14"><use href="#pcirc"/></svg>
<svg style="position:absolute;left:653px;top:671px" width="17" height="16"><use href="#open"/></svg>
<div class="t" style="left:672px;top:669px;height:20px;line-height:20px;font-size:11.7px;font-weight:700;">Open</div>
<div style="left:215px;top:128px;width:1351px;height:1px;background:#e6e6e6;"></div>
<div style="left:215px;top:148px;width:1351px;height:1px;background:#e6e6e6;"></div>
<div style="left:215px;top:168px;width:1351px;height:1px;background:#e6e6e6;"></div>
<div style="left:215px;top:188px;width:1351px;height:1px;background:#e6e6e6;"></div>
<div style="left:215px;top:208px;width:1351px;height:1px;background:#e6e6e6;"></div>
<div style="left:215px;top:228px;width:1351px;height:1px;background:#e6e6e6;"></div>
<div style="left:215px;top:248px;width:1351px;height:1px;background:#e6e6e6;"></div>
<div style="left:215px;top:268px;width:1351px;height:1px;background:#e6e6e6;"></div>
<div style="left:215px;top:288px;width:1351px;height:1px;background:#e6e6e6;"></div>
<div style="left:215px;top:308px;width:1351px;height:1px;background:#e6e6e6;"></div>
<div style="left:215px;top:328px;width:1351px;height:1px;background:#e6e6e6;"></div>
<div style="left:215px;top:348px;width:1351px;height:1px;background:#e6e6e6;"></div>
<div style="left:215px;top:368px;width:1351px;height:1px;background:#e6e6e6;"></div>
<div style="left:215px;top:388px;width:1351px;height:1px;background:#e6e6e6;"></div>
<div style="left:215px;top:408px;width:1351px;height:1px;background:#7d7d7d;"></div>
<div style="left:215px;top:428px;width:1351px;height:1px;background:#7d7d7d;"></div>
<div style="left:234px;top:448px;width:1332px;height:1px;background:#7d7d7d;"></div>
<div style="left:215px;top:468px;width:1351px;height:1px;background:#7d7d7d;"></div>
<div style="left:215px;top:488px;width:1351px;height:1px;background:#7d7d7d;"></div>
<div style="left:234px;top:508px;width:1332px;height:1px;background:#7d7d7d;"></div>
<div style="left:215px;top:528px;width:1351px;height:1px;background:#e6e6e6;"></div>
<div style="left:215px;top:548px;width:1351px;height:1px;background:#e6e6e6;"></div>
<div style="left:215px;top:568px;width:1351px;height:1px;background:#e6e6e6;"></div>
<div style="left:215px;top:588px;width:1351px;height:1px;background:#e6e6e6;"></div>
<div style="left:215px;top:608px;width:1351px;height:1px;background:#e6e6e6;"></div>
<div style="left:215px;top:628px;width:1351px;height:1px;background:#7d7d7d;"></div>
<div style="left:215px;top:648px;width:1351px;height:1px;background:#7d7d7d;"></div>
<div style="left:234px;top:668px;width:1332px;height:1px;background:#7d7d7d;"></div>
<div style="left:253px;top:688px;width:1313px;height:1px;background:#7d7d7d;"></div>
<div style="left:234px;top:428px;width:1px;height:21px;background:#7d7d7d;"></div>
<div style="left:234px;top:488px;width:1px;height:21px;background:#7d7d7d;"></div>
<div style="left:234px;top:648px;width:1px;height:21px;background:#7d7d7d;"></div>
<div style="left:253px;top:668px;width:1px;height:21px;background:#7d7d7d;"></div>
<div style="left:355px;top:108px;width:1px;height:580px;background:#2c3b52;"></div>
<div style="left:1566px;top:108px;width:3px;height:598px;background:#fff;"></div>
<div style="left:1567px;top:540px;width:1.5px;height:77px;background:#c8c8c8;"></div>
<div style="left:215px;top:688.5px;width:1351px;height:18px;background:#fff;"></div>
<div style="left:215px;top:690.0px;width:1351px;height:1px;background:#f2f2f2;"></div>
<div style="left:215px;top:702.0px;width:1351px;height:4px;background:#ececec;"></div>
<div style="left:232.5px;top:691.0px;width:689.0px;height:15px;background:#fff;border:1px solid #cbcbcb;border-radius:2px;"></div>
<svg style="position:absolute;left:574.0px;top:695.5px;" width="6" height="6" viewBox="0 0 6 6"><path d="M0.5 0V6M2 0V6M3.5 0V6M5 0V6" stroke="#999" stroke-width="0.8"/></svg>
<svg style="position:absolute;left:221px;top:694.0px;" width="6" height="10" viewBox="0 0 6 10"><path d="M5.5 0V10L0 5Z" fill="#8f8f8f"/></svg>
<svg style="position:absolute;left:1553px;top:694.0px;" width="6" height="10" viewBox="0 0 6 10"><path d="M0.5 0V10L6 5Z" fill="#8f8f8f"/></svg>
<div style="left:0px;top:706px;width:1569px;height:21px;background:#fff;"></div>
<div style="left:0px;top:720px;width:1569px;height:7px;background:#f0f0f0;"></div>
<div class="t" style="left:-0.41px;top:706.5px;height:20px;line-height:20px;font-size:11.7px;color:#111;transform-origin:0 0;transform:scaleX(0.9674);overflow:visible;">Rows Loaded: 33</div>
<div class="t" style="left:94.05px;top:706.5px;height:20px;line-height:20px;font-size:11.7px;color:#111;transform-origin:0 0;transform:scaleX(1.0000);overflow:visible;">|</div>
<div class="t" style="left:102.79px;top:706.5px;height:20px;line-height:20px;font-size:11.7px;color:#111;transform-origin:0 0;transform:scaleX(0.9699);overflow:visible;">Rows Displayed: 33</div>
<div class="t" style="left:208.65px;top:706.5px;height:20px;line-height:20px;font-size:11.7px;color:#111;transform-origin:0 0;transform:scaleX(1.0000);overflow:visible;">|</div>
<div class="t" style="left:217.34px;top:706.5px;height:20px;line-height:20px;font-size:11.7px;color:#111;transform-origin:0 0;transform:scaleX(1.0238);overflow:visible;">Hierarchy view with 20 top row(s)</div>
<div style="left:0px;top:727px;width:1569px;height:2px;background:#7850c1;"></div>
<div class="t" style="left:416.4px;top:706.0px;height:20px;line-height:20px;font-size:16px;font-weight:700;color:#f00;-webkit-text-stroke:0.5px #f00;transform-origin:0 0;transform:scaleX(1.1383);overflow:visible">original grid, no filter</div>
<div style="left:939px;top:0;width:630px;height:452px;overflow:hidden;background:#fff;box-shadow:0 0 4px rgba(0,0,0,0.4)">
<div style="left:-939px;top:0;width:1569px;height:452px"><div style="left:941px;top:0px;width:628px;height:32px;background:#fff;"></div>
<div style="left:1044px;top:0px;width:1px;height:25px;background:#dcdcdc;"></div>
<div style="left:1192px;top:0px;width:1px;height:25px;background:#dcdcdc;"></div>
<div style="left:1247px;top:0px;width:1px;height:25px;background:#dcdcdc;"></div>
<div style="left:1301px;top:0px;width:1px;height:25px;background:#dcdcdc;"></div>
<div style="left:1345px;top:0px;width:1px;height:25px;background:#dcdcdc;"></div>
<div style="left:1395px;top:0px;width:1px;height:25px;background:#dcdcdc;"></div>
<div style="left:1476px;top:0px;width:1px;height:25px;background:#dcdcdc;"></div>
<div style="left:1546px;top:0px;width:1px;height:25px;background:#dcdcdc;"></div>
<svg style="position:absolute;left:965.5px;top:5px" width="6" height="3.5"><use href="#arrdn"/></svg>
<svg style="position:absolute;left:1011.5px;top:5px" width="6" height="3.5"><use href="#arrdn"/></svg>
<svg style="position:absolute;left:1320.5px;top:5px" width="6" height="3.5"><use href="#arrdn"/></svg>
<svg style="position:absolute;left:1509px;top:5px" width="6" height="3.5"><use href="#arrdn"/></svg>
<div class="t" style="left:1051.99px;top:-6px;height:16px;line-height:16px;font-size:12px;color:#333;transform-origin:0 0;transform:scaleX(1.0557);overflow:visible;">Map...</div>
<svg style="position:absolute;left:1088px;top:0px" width="7" height="4"><use href="#arrdn2"/></svg>
<div class="t" style="left:1100.98px;top:-6px;height:16px;line-height:16px;font-size:12px;color:#333;transform-origin:0 0;transform:scaleX(1.0349);overflow:visible;">Configuration</div>
<svg style="position:absolute;left:1177px;top:0px" width="7" height="4"><use href="#arrdn2"/></svg>
<div class="t" style="left:1209.00px;top:-6px;height:16px;line-height:16px;font-size:12px;color:#333;transform-origin:0 0;transform:scaleX(1.1164);overflow:visible;">All</div>
<svg style="position:absolute;left:1225px;top:0px" width="7" height="4"><use href="#arrdn2"/></svg>
<div class="t" style="left:1354.08px;top:-6px;height:16px;line-height:16px;font-size:12px;color:#333;transform-origin:0 0;transform:scaleX(0.9607);overflow:visible;">Files</div>
<svg style="position:absolute;left:1380px;top:0px" width="7" height="4"><use href="#arrdn2"/></svg>
<div class="t" style="left:1407.80px;top:-6px;height:16px;line-height:16px;font-size:12px;color:#333;transform-origin:0 0;transform:scaleX(1.0284);overflow:visible;">retention</div>
<svg style="position:absolute;left:1458px;top:0px" width="7" height="4"><use href="#arrdn2"/></svg>
<div class="t" style="left:1268px;top:-6px;height:16px;line-height:16px;font-size:12px;color:#bbb;">All</div>
<div class="t" style="left:1107.94px;top:10px;height:18px;line-height:18px;font-size:12px;color:#666;transform-origin:0 0;transform:scaleX(0.9324);overflow:visible;">View</div>
<div class="t" style="left:1202.12px;top:10px;height:18px;line-height:18px;font-size:12px;color:#666;transform-origin:0 0;transform:scaleX(0.9190);overflow:visible;">Refresh</div>
<div class="t" style="left:1264.53px;top:10px;height:18px;line-height:18px;font-size:12px;color:#666;transform-origin:0 0;transform:scaleX(0.8752);overflow:visible;">Save</div>
<div style="left:941px;top:31px;width:628px;height:1.5px;background:#d0d0d0;"></div>
<div style="left:946px;top:32px;width:623px;height:35px;background:#e8e8e8;"></div>
<div style="left:946px;top:33px;width:33px;height:34px;background:#c5d3e2;border:2px solid #2e73b6;"></div>
<div style="left:979px;top:33px;width:33px;height:34px;background:#e8e8e8;border-right:1px solid #d4d4d4;border-bottom:1px solid #d4d4d4;"></div>
<svg style="position:absolute;left:952px;top:39px" width="20" height="20"><use href="#hier"/></svg>
<svg style="position:absolute;left:986px;top:40px" width="20" height="20"><use href="#blist"/></svg>
<div class="t" style="left:1018px;top:36px;height:20px;line-height:20px;font-size:12px;color:#333;">Drag a column header to this grouping zone to categorize your grid data</div>
<svg style="position:absolute;left:1527px;top:39px" width="18" height="20"><use href="#trash"/></svg>
<div style="left:1555px;top:33px;width:1px;height:34px;background:#d0d0d0;"></div>
<svg style="position:absolute;left:1561px;top:42px" width="15" height="15"><use href="#gear"/></svg>
<div style="left:941px;top:67px;width:206px;height:385px;background:#fff;"></div>
<div class="t" style="left:949px;top:71px;height:20px;line-height:20px;font-size:14.6px;color:#7850c1;font-weight:700;">Job Center</div>
<div class="t" style="left:949px;top:90px;height:18px;line-height:18px;font-size:12.1px;color:#7850c1;">What would you like to do?</div>
<div style="left:941px;top:114px;width:206px;height:1px;background:#d6d6d6;"></div>
<svg style="position:absolute;left:952px;top:119px" width="18" height="18"><use href="#magline"/></svg>
<div class="t" style="left:982px;top:119px;height:20px;line-height:20px;font-size:12px;color:#777;">Search</div>
<div style="left:941px;top:141px;width:206px;height:1px;background:#7850c1;"></div>
<svg style="position:absolute;left:949px;top:150px" width="22" height="22"><use href="#reset"/></svg>
<div class="t" style="left:982px;top:152px;height:18px;line-height:18px;font-size:12px;color:#555;">Reset</div>
<div style="left:941px;top:177px;width:203px;height:1px;background:#d9d9d9;"></div>
<svg style="position:absolute;left:949px;top:189px" width="22" height="22"><use href="#magbold"/></svg>
<div class="t" style="left:982px;top:185px;height:18px;line-height:18px;font-size:12px;color:#555;">File query by name or type</div>
<div class="t" style="left:982px;top:200px;height:18px;line-height:18px;font-size:12px;color:#555;">for selected</div>
<div style="left:941px;top:221px;width:203px;height:1px;background:#d9d9d9;"></div>
<svg style="position:absolute;left:949px;top:228px" width="22" height="20"><use href="#binoc"/></svg>
<div class="t" style="left:982px;top:229px;height:18px;line-height:18px;font-size:12px;color:#555;">Shared as Anonymous</div>
<div style="left:941px;top:254px;width:203px;height:1px;background:#d9d9d9;"></div>
<svg style="position:absolute;left:949px;top:261px" width="22" height="20"><use href="#binoc"/></svg>
<div class="t" style="left:982px;top:262px;height:18px;line-height:18px;font-size:12px;color:#555;">Duplicates</div>
<div style="left:941px;top:287px;width:203px;height:1px;background:#d9d9d9;"></div>
<svg style="position:absolute;left:952px;top:300px" width="16" height="20"><use href="#filedoc"/></svg>
<div class="t" style="left:982px;top:295px;height:18px;line-height:18px;font-size:12px;color:#555;">Files created within the</div>
<div class="t" style="left:982px;top:311px;height:18px;line-height:18px;font-size:12px;color:#555;">date/time range</div>
<div style="left:941px;top:331px;width:203px;height:1px;background:#d9d9d9;"></div>
<svg style="position:absolute;left:950px;top:339px" width="20" height="20"><use href="#empty"/></svg>
<div class="t" style="left:982px;top:339px;height:18px;line-height:18px;font-size:12px;color:#555;">Users without any files</div>
<div style="left:941px;top:364px;width:203px;height:1px;background:#d9d9d9;"></div>
<svg style="position:absolute;left:950px;top:378px" width="20" height="20"><use href="#funnel"/></svg>
<div class="t" style="left:982px;top:372px;height:18px;line-height:18px;font-size:12px;color:#555;">Users with shared OneDrive</div>
<div class="t" style="left:982px;top:388px;height:18px;line-height:18px;font-size:12px;color:#555;">files</div>
<div style="left:941px;top:409px;width:203px;height:1px;background:#d9d9d9;"></div>
<div style="left:941px;top:421px;width:206px;height:31px;background:#efefef;border-top:1px solid #d4d4d4;"></div>
<svg style="position:absolute;left:980.3px;top:432px" width="15" height="12.5"><use href="#bulb"/></svg>
<div class="t" style="left:1003.26px;top:430px;height:18px;line-height:18px;font-size:12.3px;color:#7850c1;transform-origin:0 0;transform:scaleX(0.9787);overflow:visible;">Suggest a new &#39;job&#39;</div>
<div style="left:1147px;top:67px;width:14px;height:385px;background:#7850c1;"></div>
<svg style="position:absolute;left:1151px;top:253px;" width="7" height="12" viewBox="0 0 7 12"><path d="M6 1L1.5 6L6 11" fill="none" stroke="#fff" stroke-width="1.4"/></svg>
<div style="left:1161px;top:67px;width:408px;height:45px;background:#fff;"></div>
<div style="left:1161px;top:66px;width:408px;height:1px;background:#cfcfcf;"></div>
<div style="left:1161px;top:82px;width:408px;height:7px;background:#efefef;"></div>
<div style="left:1161px;top:89px;width:408px;height:1px;background:#a9a9a9;"></div>
<div style="left:1161px;top:105px;width:408px;height:7px;background:#efefef;"></div>
<div style="left:1161px;top:112px;width:408px;height:1px;background:#a9a9a9;"></div>
<div class="t" style="left:1163px;top:67px;height:22px;line-height:22px;font-size:11.7px;">System</div>
<div style="left:1301px;top:68px;width:1px;height:21px;background:#d0d0d0;"></div>
<div class="t" style="left:1304px;top:67px;height:22px;line-height:22px;font-size:11.7px;">Drive Item Info</div>
<div style="left:1261px;top:93px;width:1px;height:17px;background:#b8b8b8;"></div>
<div style="left:1281px;top:93px;width:1px;height:17px;background:#b8b8b8;"></div>
<div style="left:1301px;top:93px;width:1px;height:17px;background:#b8b8b8;"></div>
<div style="left:1321px;top:93px;width:1px;height:17px;background:#b8b8b8;"></div>
<div style="left:1301px;top:90px;width:1px;height:22px;background:#2c3b52;"></div>
<svg style="position:absolute;left:1166px;top:95px" width="9" height="11"><use href="#lock"/></svg>
<div class="t" style="left:1180.58px;top:90px;height:20px;line-height:20px;font-size:11.7px;color:#000;transform-origin:0 0;transform:scaleX(0.9830);overflow:visible;">Hierarchy Ra...</div>
<div style="left:1259px;top:89px;width:26px;height:23px;background:linear-gradient(#cdcdcd,#e6e6e6 25%,#f0f0f0);"></div>
<div style="left:1261px;top:93px;width:1px;height:19px;background:#bdbdbd;"></div>
<div style="left:1281px;top:93px;width:1px;height:19px;background:#bdbdbd;"></div>
<svg style="position:absolute;left:1262px;top:94px" width="16" height="14"><use href="#filt"/></svg>
<svg style="position:absolute;left:1287px;top:95px" width="9" height="11"><use href="#lock"/></svg>
<div class="t" style="left:1303px;top:89px;height:22px;line-height:22px;font-size:11.7px;">I...</div>
<div class="t" style="left:1324px;top:89px;height:22px;line-height:22px;font-size:11.7px;">File Name</div>
<div style="left:1161px;top:113px;width:408px;height:19px;background:#fff;"></div>
<div style="left:1161px;top:113px;width:101px;height:19px;background:#8fa5bf;"></div>
<svg style="position:absolute;left:1166px;top:115px" width="16" height="16"><use href="#expm"/></svg>
<div class="t" style="left:1161px;top:113px;height:20px;line-height:20px;font-size:11.7px;font-weight:700;width:97px;text-align:right;">1</div>
<svg style="position:absolute;left:1264px;top:116px" width="15" height="12"><use href="#bfold"/></svg>
<svg style="position:absolute;left:1305px;top:114px" width="15" height="17"><use href="#yfold"/></svg>
<div class="t" style="left:1324px;top:113px;height:20px;line-height:20px;font-size:11.7px;font-weight:700;width:245px;text-align:left;">Feedback</div>
<div style="left:1161px;top:132px;width:408px;height:20px;background:#fff;"></div>
<div style="left:1282px;top:133px;width:1px;height:19px;background:#e6e6e6;"></div>
<div style="left:1322px;top:133px;width:1px;height:19px;background:#e6e6e6;"></div>
<div style="left:1180px;top:133px;width:82px;height:19px;background:#8fa5bf;"></div>
<svg style="position:absolute;left:1185px;top:135px" width="16" height="16"><use href="#leaf"/></svg>
<div class="t" style="left:1161px;top:133px;height:20px;line-height:20px;font-size:11.7px;width:97px;text-align:right;">2</div>
<svg style="position:absolute;left:1264px;top:136px" width="15" height="12"><use href="#bfold"/></svg>
<svg style="position:absolute;left:1305px;top:134px" width="15" height="17"><use href="#yfold"/></svg>
<div class="t" style="left:1322.84px;top:133px;height:20px;line-height:20px;font-size:11.7px;color:#000;transform-origin:0 0;transform:scaleX(0.9374);overflow:visible;">{532AB44C-BC75-4850-8BCE-1FB5DE00BE7E}</div>
<div style="left:1161px;top:152px;width:408px;height:20px;background:#fff;"></div>
<div style="left:1161px;top:153px;width:101px;height:19px;background:#8fa5bf;"></div>
<svg style="position:absolute;left:1166px;top:155px" width="16" height="16"><use href="#expm"/></svg>
<div class="t" style="left:1161px;top:153px;height:20px;line-height:20px;font-size:11.7px;font-weight:700;width:97px;text-align:right;">1</div>
<svg style="position:absolute;left:1264px;top:156px" width="15" height="12"><use href="#bfold"/></svg>
<svg style="position:absolute;left:1305px;top:154px" width="15" height="17"><use href="#yfold"/></svg>
<div class="t" style="left:1324px;top:153px;height:20px;line-height:20px;font-size:11.7px;font-weight:700;width:245px;text-align:left;">Folder</div>
<div style="left:1161px;top:172px;width:408px;height:20px;background:#fff;"></div>
<div style="left:1282px;top:173px;width:1px;height:19px;background:#e6e6e6;"></div>
<div style="left:1322px;top:173px;width:1px;height:19px;background:#e6e6e6;"></div>
<div style="left:1180px;top:173px;width:82px;height:19px;background:#8fa5bf;"></div>
<svg style="position:absolute;left:1185px;top:175px" width="16" height="16"><use href="#leaf"/></svg>
<div class="t" style="left:1161px;top:173px;height:20px;line-height:20px;font-size:11.7px;width:97px;text-align:right;">2</div>
<svg style="position:absolute;left:1264px;top:176px" width="15" height="12"><use href="#bfold"/></svg>
<svg style="position:absolute;left:1305px;top:174px" width="15" height="17"><use href="#yfold"/></svg>
<div class="t" style="left:1324px;top:173px;height:20px;line-height:20px;font-size:11.7px;width:245px;text-align:left;">2017-09-08 14.48.13</div>
<div style="left:1161px;top:192px;width:408px;height:20px;background:#fff;"></div>
<div style="left:1282px;top:193px;width:1px;height:19px;background:#e6e6e6;"></div>
<div style="left:1322px;top:193px;width:1px;height:19px;background:#e6e6e6;"></div>
<div style="left:1161px;top:193px;width:101px;height:19px;background:#8fa5bf;"></div>
<svg style="position:absolute;left:1166px;top:195px" width="16" height="16"><use href="#leaf"/></svg>
<div class="t" style="left:1161px;top:193px;height:20px;line-height:20px;font-size:11.7px;width:97px;text-align:right;">1</div>
<svg style="position:absolute;left:1264px;top:196px" width="15" height="12"><use href="#bfold"/></svg>
<svg style="position:absolute;left:1305px;top:194px" width="15" height="17"><use href="#yfold"/></svg>
<div class="t" style="left:1324px;top:193px;height:20px;line-height:20px;font-size:11.7px;width:245px;text-align:left;">jjj</div>
<div style="left:1161px;top:212px;width:408px;height:20px;background:#fff;"></div>
<div style="left:1282px;top:213px;width:1px;height:19px;background:#e6e6e6;"></div>
<div style="left:1322px;top:213px;width:1px;height:19px;background:#e6e6e6;"></div>
<div style="left:1161px;top:213px;width:101px;height:19px;background:#8fa5bf;"></div>
<svg style="position:absolute;left:1166px;top:215px" width="16" height="16"><use href="#leaf"/></svg>
<div class="t" style="left:1161px;top:213px;height:20px;line-height:20px;font-size:11.7px;width:97px;text-align:right;">1</div>
<svg style="position:absolute;left:1264px;top:216px" width="15" height="12"><use href="#bfold"/></svg>
<svg style="position:absolute;left:1305px;top:214px" width="15" height="17"><use href="#yfold"/></svg>
<div class="t" style="left:1324px;top:213px;height:20px;line-height:20px;font-size:11.7px;width:245px;text-align:left;">One</div>
<div style="left:1161px;top:232px;width:408px;height:20px;background:#fff;"></div>
<div style="left:1161px;top:233px;width:101px;height:19px;background:#8fa5bf;"></div>
<svg style="position:absolute;left:1166px;top:235px" width="16" height="16"><use href="#expm"/></svg>
<div class="t" style="left:1161px;top:233px;height:20px;line-height:20px;font-size:11.7px;font-weight:700;width:97px;text-align:right;">1</div>
<svg style="position:absolute;left:1264px;top:236px" width="15" height="12"><use href="#bfold"/></svg>
<svg style="position:absolute;left:1305px;top:234px" width="15" height="17"><use href="#yfold"/></svg>
<div class="t" style="left:1324px;top:233px;height:20px;line-height:20px;font-size:11.7px;font-weight:700;width:245px;text-align:left;">WindowsPowerShell</div>
<div style="left:1161px;top:252px;width:408px;height:20px;background:#fff;"></div>
<div style="left:1180px;top:253px;width:82px;height:19px;background:#8fa5bf;"></div>
<svg style="position:absolute;left:1185px;top:255px" width="16" height="16"><use href="#expm"/></svg>
<div class="t" style="left:1161px;top:253px;height:20px;line-height:20px;font-size:11.7px;font-weight:700;width:97px;text-align:right;">2</div>
<svg style="position:absolute;left:1264px;top:256px" width="15" height="12"><use href="#bfold"/></svg>
<svg style="position:absolute;left:1305px;top:254px" width="15" height="17"><use href="#yfold"/></svg>
<div class="t" style="left:1324px;top:253px;height:20px;line-height:20px;font-size:11.7px;font-weight:700;width:245px;text-align:left;">Scripts</div>
<div style="left:1161px;top:272px;width:408px;height:20px;background:#fff;"></div>
<div style="left:1282px;top:273px;width:1px;height:19px;background:#e6e6e6;"></div>
<div style="left:1322px;top:273px;width:1px;height:19px;background:#e6e6e6;"></div>
<div style="left:1199px;top:273px;width:63px;height:19px;background:#8fa5bf;"></div>
<svg style="position:absolute;left:1204px;top:275px" width="16" height="16"><use href="#leaf"/></svg>
<div class="t" style="left:1161px;top:273px;height:20px;line-height:20px;font-size:11.7px;width:97px;text-align:right;">3</div>
<svg style="position:absolute;left:1264px;top:276px" width="15" height="12"><use href="#bfold"/></svg>
<svg style="position:absolute;left:1305px;top:274px" width="15" height="17"><use href="#yfold"/></svg>
<div class="t" style="left:1324px;top:273px;height:20px;line-height:20px;font-size:11.7px;width:245px;text-align:left;">InstalledScriptInfos</div>
<div style="left:1161px;top:112px;width:408px;height:1px;background:#7d7d7d;"></div>
<div style="left:1161px;top:132px;width:408px;height:1px;background:#7d7d7d;"></div>
<div style="left:1161px;top:152px;width:408px;height:1px;background:#7d7d7d;"></div>
<div style="left:1161px;top:172px;width:408px;height:1px;background:#7d7d7d;"></div>
<div style="left:1161px;top:192px;width:408px;height:1px;background:#e6e6e6;"></div>
<div style="left:1161px;top:212px;width:408px;height:1px;background:#e6e6e6;"></div>
<div style="left:1161px;top:232px;width:408px;height:1px;background:#7d7d7d;"></div>
<div style="left:1161px;top:252px;width:408px;height:1px;background:#7d7d7d;"></div>
<div style="left:1180px;top:272px;width:389px;height:1px;background:#7d7d7d;"></div>
<div style="left:1161px;top:292px;width:408px;height:1px;background:#e6e6e6;"></div>
<div style="left:1180px;top:252px;width:1px;height:21px;background:#7d7d7d;"></div>
<div style="left:1301px;top:112px;width:1px;height:180px;background:#2c3b52;"></div>
<div style="left:1161px;top:292px;width:408px;height:144px;background:#fff;"></div>
<div style="left:1161px;top:435.5px;width:408px;height:18px;background:#fff;"></div>
<div style="left:1161px;top:437.0px;width:408px;height:1px;background:#f2f2f2;"></div>
<div style="left:1161px;top:449.0px;width:408px;height:4px;background:#ececec;"></div>
<div style="left:1178px;top:438.0px;width:48px;height:15px;background:#fff;border:1px solid #cbcbcb;border-radius:2px;"></div>
<svg style="position:absolute;left:1199px;top:442.5px;" width="6" height="6" viewBox="0 0 6 6"><path d="M0.5 0V6M2 0V6M3.5 0V6M5 0V6" stroke="#999" stroke-width="0.8"/></svg>
<svg style="position:absolute;left:1167px;top:441.0px;" width="6" height="10" viewBox="0 0 6 10"><path d="M5.5 0V10L0 5Z" fill="#8f8f8f"/></svg></div>
<div style="left:0px;top:0px;width:2px;height:452px;background:#5a5a5a;"></div>
</div>
<div style="left:1256px;top:86px;width:32px;height:29px;border:3px solid #ef3b3b;box-shadow:2px 2px 4px rgba(0,0,0,0.35);"></div>
<div class="t" style="left:1209px;top:49.2px;height:20px;line-height:20px;font-size:15.5px;font-weight:700;color:#f00;-webkit-text-stroke:0.5px #f00;transform-origin:0 0;transform:scaleX(1.2083);overflow:visible">filter still there</div>
<div style="left:940px;top:448px;width:629px;height:49px;overflow:hidden;border-left:1px solid #8a8a8a;box-shadow:-3px 2px 5px rgba(0,0,0,0.35)">
<div style="left:0px;top:0px;width:629px;height:4px;background:#e6e6e6;"></div>
<div style="left:0px;top:4px;width:629px;height:14px;background:#fff;"></div>
<div style="left:0px;top:18px;width:629px;height:7px;background:#efefef;"></div>
<div style="left:0px;top:45px;width:629px;height:4px;background:#f2f2f2;"></div>
<div class="t" style="left:5.48px;top:4.800000000000011px;height:20px;line-height:20px;font-size:11.7px;color:#111;transform-origin:0 0;transform:scaleX(0.9823);overflow:visible;">Rows Loaded: 9</div>
<div class="t" style="left:93.75px;top:4.800000000000011px;height:20px;line-height:20px;font-size:11.7px;color:#111;transform-origin:0 0;transform:scaleX(1.0000);overflow:visible;">|</div>
<div class="t" style="left:102.38px;top:4.800000000000011px;height:20px;line-height:20px;font-size:11.7px;color:#111;transform-origin:0 0;transform:scaleX(0.9820);overflow:visible;">Rows Displayed: 9</div>
<div class="t" style="left:202.75px;top:4.800000000000011px;height:20px;line-height:20px;font-size:11.7px;color:#111;transform-origin:0 0;transform:scaleX(1.0000);overflow:visible;">|</div>
<div class="t" style="left:211.04px;top:4.800000000000011px;height:20px;line-height:20px;font-size:11.7px;color:#111;transform-origin:0 0;transform:scaleX(1.0295);overflow:visible;">Hierarchy view with 5 top row(s)</div>
<div class="t" style="left:384.47px;top:4.800000000000011px;height:20px;line-height:20px;font-size:11.7px;color:#111;transform-origin:0 0;transform:scaleX(1.0000);overflow:visible;">-</div>
<div class="t" style="left:392.56px;top:4.800000000000011px;height:20px;line-height:20px;font-size:11.7px;color:#111;transform-origin:0 0;transform:scaleX(1.0093);overflow:visible;">Filters are applied on rows with type: File</div>
<div style="left:0px;top:25px;width:629px;height:20px;background:#7850c1;"></div>
<div class="t" style="left:3px;top:25.5px;height:20px;line-height:20px;font-size:12px;color:#fff;">Ready</div>
<div class="t" style="left:530.84px;top:25.5px;height:20px;line-height:20px;font-size:12px;color:#a68cd6;transform-origin:0 0;transform:scaleX(0.9378);overflow:visible;">CAP</div>
<div class="t" style="left:562.96px;top:25.5px;height:20px;line-height:20px;font-size:12px;color:#fff;transform-origin:0 0;transform:scaleX(1.0796);overflow:visible;">NUM</div>
<div class="t" style="left:602.11px;top:25.5px;height:20px;line-height:20px;font-size:12px;color:#a68cd6;transform-origin:0 0;transform:scaleX(0.9138);overflow:visible;">SCRL</div>
</div>
<div style="left:1147px;top:448px;width:14px;height:5px;background:#7850c1;"></div>
<div style="left:925px;top:445px;width:404px;height:54px;border:3px solid #ef3b3b;box-shadow:2px 3px 5px rgba(0,0,0,0.35);"></div>
<div class="t" style="left:1024.5px;top:473.3px;height:20px;line-height:20px;font-size:16px;font-weight:700;color:#fff;-webkit-text-stroke:0.5px #fff;transform-origin:0 0;transform:scaleX(1.1645);overflow:visible">Filter with remove</div>
<div style="left:940px;top:497px;width:629px;height:44px;overflow:hidden;border-left:1px solid #8a8a8a;box-shadow:-3px 2px 5px rgba(0,0,0,0.35)">
<div style="left:0px;top:0px;width:629px;height:3px;background:#f4f4f4;"></div>
<div style="left:0px;top:3px;width:629px;height:5px;background:linear-gradient(#a9a9a9,#e4e4e4);"></div>
<div style="left:0px;top:8px;width:629px;height:15px;background:#fff;"></div>
<div style="left:0px;top:23px;width:629px;height:1px;background:#efefef;"></div>
<div class="t" style="left:4.50px;top:3.6999999999999886px;height:20px;line-height:20px;font-size:11.7px;color:#111;transform-origin:0 0;transform:scaleX(0.9663);overflow:visible;">Rows Loaded: 33</div>
<div class="t" style="left:98.95px;top:3.6999999999999886px;height:20px;line-height:20px;font-size:11.7px;color:#111;transform-origin:0 0;transform:scaleX(1.0000);overflow:visible;">|</div>
<div class="t" style="left:107.58px;top:3.6999999999999886px;height:20px;line-height:20px;font-size:11.7px;color:#111;transform-origin:0 0;transform:scaleX(0.9820);overflow:visible;">Rows Displayed: 9</div>
<div class="t" style="left:208.05px;top:3.6999999999999886px;height:20px;line-height:20px;font-size:11.7px;color:#111;transform-origin:0 0;transform:scaleX(1.0000);overflow:visible;">|</div>
<div class="t" style="left:216.26px;top:3.6999999999999886px;height:20px;line-height:20px;font-size:11.7px;color:#111;transform-origin:0 0;transform:scaleX(1.0022);overflow:visible;">Rows Hidden: 24</div>
<div class="t" style="left:310.65px;top:3.6999999999999886px;height:20px;line-height:20px;font-size:11.7px;color:#111;transform-origin:0 0;transform:scaleX(1.0000);overflow:visible;">|</div>
<div class="t" style="left:319.54px;top:3.6999999999999886px;height:20px;line-height:20px;font-size:11.7px;color:#111;transform-origin:0 0;transform:scaleX(1.0235);overflow:visible;">Hierarchy view with 20 top row(s) [15 hidden]</div>
<div class="t" style="left:561.87px;top:3.6999999999999886px;height:20px;line-height:20px;font-size:11.7px;color:#111;transform-origin:0 0;transform:scaleX(1.0000);overflow:visible;">-</div>
<div class="t" style="left:570.05px;top:3.6999999999999886px;height:20px;line-height:20px;font-size:11.7px;color:#111;transform-origin:0 0;transform:scaleX(1.0117);overflow:visible;">Filters are applied on rows with type: File</div>
<div style="left:0px;top:24px;width:629px;height:20px;background:#7850c1;"></div>
<div class="t" style="left:3px;top:24.5px;height:20px;line-height:20px;font-size:12px;color:#fff;">Ready</div>
<div class="t" style="left:530.84px;top:24.5px;height:20px;line-height:20px;font-size:12px;color:#a68cd6;transform-origin:0 0;transform:scaleX(0.9378);overflow:visible;">CAP</div>
<div class="t" style="left:562.96px;top:24.5px;height:20px;line-height:20px;font-size:12px;color:#fff;transform-origin:0 0;transform:scaleX(1.0796);overflow:visible;">NUM</div>
<div class="t" style="left:602.11px;top:24.5px;height:20px;line-height:20px;font-size:12px;color:#a68cd6;transform-origin:0 0;transform:scaleX(0.9138);overflow:visible;">SCRL</div>
</div>
<div style="left:1147px;top:497px;width:14px;height:3.5px;background:#7850c1;"></div>
<div style="left:931px;top:496px;width:570px;height:51px;border:3px solid #ef3b3b;box-shadow:2px 3px 5px rgba(0,0,0,0.35);"></div>
<div class="t" style="left:1020px;top:522.1px;height:20px;line-height:20px;font-size:16px;font-weight:700;color:#fff;-webkit-text-stroke:0.5px #fff;transform-origin:0 0;transform:scaleX(1.1602);overflow:visible">Filter without remove</div>
</body></html>
